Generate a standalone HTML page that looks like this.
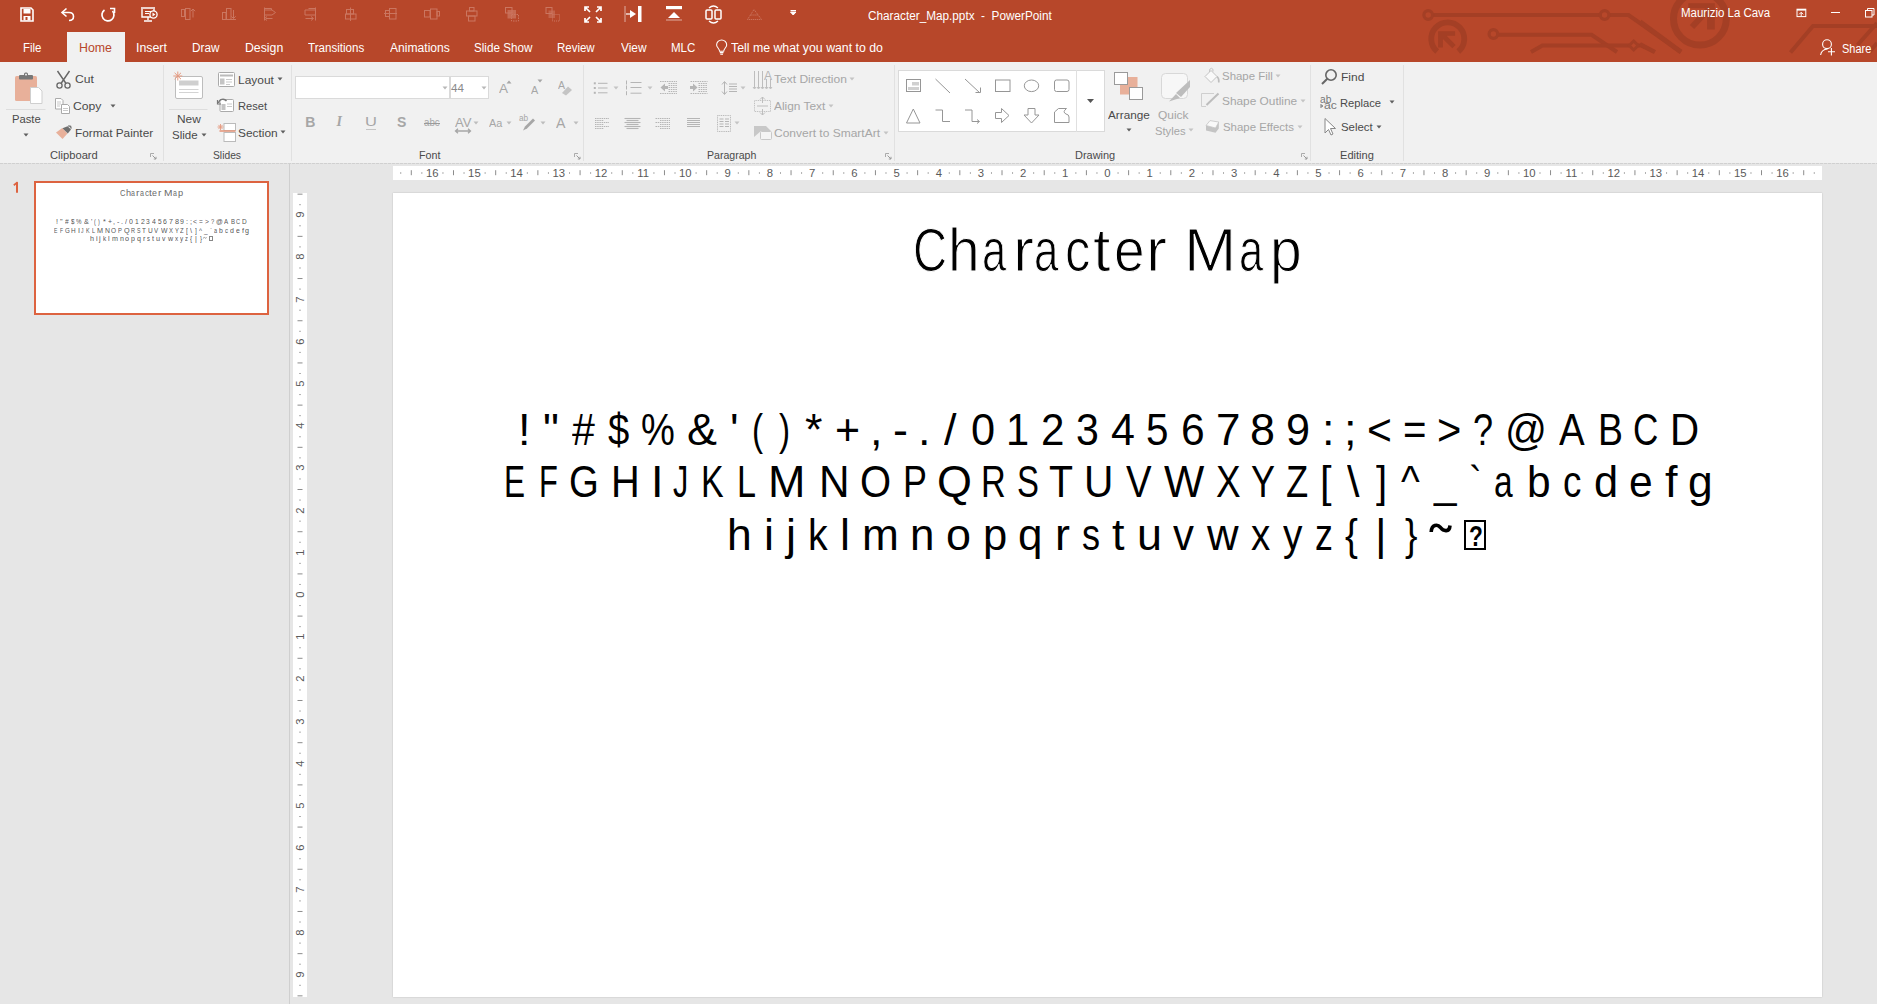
<!DOCTYPE html>
<html><head><meta charset="utf-8"><title>Character_Map.pptx - PowerPoint</title>
<style>
html,body{margin:0;padding:0;width:1877px;height:1004px;overflow:hidden;background:#E6E6E6;}
body{position:relative;font-family:"Liberation Sans",sans-serif;}
.t{position:absolute;white-space:pre;transform-origin:0 0;font-family:"Liberation Sans",sans-serif;}
svg{display:block;}
</style></head><body>
<div style="position:absolute;left:0px;top:0px;width:1877px;height:62px;background:#B7472A"></div>
<svg style="position:absolute;left:0px;top:0px;" width="1877" height="62" viewBox="0 0 1877 62"><g fill="none" stroke="#A43F25" stroke-width="4" stroke-linejoin="miter"><path d="M1432.5 15 H1600 M1609.5 15 H1628.5 L1681 52"/><circle cx="1428.2" cy="15" r="4.3" stroke-width="3.2"/><circle cx="1604.6" cy="15" r="4.3" stroke-width="3.2"/><path d="M1497.5 34.8 H1591.6 L1617 52"/><circle cx="1493.4" cy="34" r="4.3" stroke-width="3.2"/><path d="M1531 52 L1542.4 45.5 H1629.5 M1638 45.5 H1641 L1654.5 52"/><path d="M1633.7 41 L1638.2 45.5 L1633.7 50 L1629.2 45.5 Z" stroke-width="3"/><path d="M1790.5 52.5 L1813 25.9 H1877"/><path d="M1877 23 L1857.5 45"/><path d="M1877 43 L1869 52.5"/><path d="M1640 21.7 L1681 52" stroke-width="4.8"/><path d="M1640 44 L1655 52"/><path d="M1437.2 51.5 A16.5 16.5 0 1 1 1458.3 51.5" stroke-width="5.8"/><circle cx="1699.9" cy="18.7" r="26.4" stroke-width="7"/><path d="M1692 27 L1708 10" stroke-width="6"/></g><path d="M1438.1 31.3 H1455.1 V35.8 H1446.6 L1455.7 44.9 L1452.3 48.3 L1442.9 38.9 V47.6 H1438.1 Z" fill="#A43F25"/><path d="M1688.3 3.2 H1714.8 V29.4 H1707.1 V8.3 H1688.3 Z" fill="#A43F25"/></svg>
<svg style="position:absolute;left:0px;top:0px;" width="820" height="32" viewBox="0 0 820 32"><path d="M21 8 H31 L33 10 V21 H21 Z" fill="none" stroke="#FFFFFF" stroke-width="1.6"/><rect x="23.5" y="9" width="7" height="4.5" fill="#FFFFFF"/><rect x="23.5" y="16" width="7" height="4.5" fill="#FFFFFF"/><rect x="25.5" y="17" width="2" height="3" fill="#B7472A"/><path d="M62.5 12.5 H69 Q73.5 12.5 73.5 16.5 Q73.5 20.5 69 20.5" fill="none" stroke="#FFFFFF" stroke-width="1.6"/><path d="M66.5 8.5 L62 12.5 L66.5 16.5" fill="none" stroke="#FFFFFF" stroke-width="1.6"/><path d="M112.5 11 A6 6 0 1 1 104.5 10" fill="none" stroke="#FFFFFF" stroke-width="1.7"/><path d="M110 8.5 H114.5 V13" fill="none" stroke="#FFFFFF" stroke-width="1.6"/><path d="M141 8 H155 M142 9 V17 H154 V9" fill="none" stroke="#FFFFFF" stroke-width="1.4"/><path d="M145 11.5 H151 M145 13.5 H149" stroke="#FFFFFF" stroke-width="1"/><circle cx="153.5" cy="14.5" r="3.6" fill="#B7472A" stroke="#FFFFFF" stroke-width="1.3"/><path d="M152.5 12.6 V16.4 L155.3 14.5 Z" fill="#FFFFFF"/><path d="M148 17 V20 M144 21 H152" stroke="#FFFFFF" stroke-width="1.4"/><g fill="none" stroke="#CB7660" stroke-width="1"><rect x="181.5" y="9.5" width="3" height="7"/><rect x="185.5" y="8.5" width="4.5" height="11"/><path d="M193 17.5 V9 M190.8 11.2 L193 9 L195.2 11.2"/><rect x="222.5" y="12.5" width="3.5" height="7"/><rect x="226.5" y="8.5" width="4.5" height="11"/><path d="M233.5 10 V18.5 M231.3 16.3 L233.5 18.5 L235.7 16.3 M222 19.5 H236"/><path d="M264.5 7.5 V20.5 M264.5 8.5 H271.5 V10 M264.5 10 H272 L275.5 12.5 L272 15 H264.5 M266 18.5 H272.5 M264.5 18.5 L267 16.5 M264.5 18.5 L267 20.5"/><path d="M315.5 7.5 V20.5 M308.5 8.5 H315.5 M305 10 H315.5 M305 10 V15 H315.5 M305.5 18.5 H313 M311 16.5 L313.5 18.5 L311 20.5"/><rect x="346.5" y="9.5" width="7" height="4.5"/><rect x="345.5" y="14" width="10.5" height="5"/><path d="M350.5 7.5 V21"/><rect x="385.5" y="10.5" width="4" height="6"/><rect x="389.5" y="8.5" width="6.5" height="10.5"/><path d="M384 13.5 H397"/><rect x="424.5" y="10.5" width="5.5" height="6.5"/><rect x="430.5" y="9" width="6.5" height="10"/><rect x="437" y="11.5" width="2.5" height="4.5"/><rect x="469.5" y="7.5" width="4.5" height="3.5"/><rect x="466.5" y="11" width="10.5" height="5"/><rect x="468.5" y="16" width="6.5" height="5"/><rect x="505.5" y="7.5" width="6.5" height="5.5"/><rect x="511.5" y="14.5" width="7" height="6.5" stroke-dasharray="1.5 1"/><rect x="546" y="7.5" width="6" height="6"/><rect x="552.5" y="14.5" width="7" height="6.5" stroke-dasharray="1 1"/><path d="M747.5 19.5 L754 9.5 L761.5 19.5 Z M750.5 15 L758 15" stroke-dasharray="1.2 0.8"/></g><rect x="507.5" y="10" width="8.5" height="8.5" fill="#CB7660" opacity="0.75"/><rect x="548.5" y="10.5" width="6.5" height="7.5" fill="#CB7660" opacity="0.6"/><g fill="none" stroke="#FFFFFF" stroke-width="1.7"><path d="M585 11 V7 H589 M585 7 L590 12"/><path d="M601 11 V7 H597 M601 7 L596 12"/><path d="M585 18 V22 H589 M585 22 L590 17"/><path d="M601 18 V22 H597 M601 22 L596 17"/></g><path d="M625 6 V22" stroke="#FFFFFF" stroke-width="0.8" opacity="0.7"/><rect x="638" y="6" width="3.5" height="16" fill="#FFFFFF"/><path d="M630 10 L636 14 L630 18 Z" fill="#FFFFFF"/><path d="M626 14 H631" stroke="#FFFFFF" stroke-width="1.2"/><rect x="666" y="6" width="16" height="3.2" fill="#FFFFFF"/><path d="M668 18 L674 12 L680 18 Z" fill="#FFFFFF"/><path d="M666 20 H682" stroke="#FFFFFF" stroke-width="0.8" opacity="0.7"/><rect x="706" y="10" width="6" height="9" rx="1" fill="none" stroke="#FFFFFF" stroke-width="1.5"/><rect x="715" y="10" width="6" height="9" rx="1" fill="none" stroke="#FFFFFF" stroke-width="1.5"/><path d="M709 8 Q713.5 4 718 8 M709 21 Q713.5 25 718 21" fill="none" stroke="#FFFFFF" stroke-width="1.3"/><path d="M790.5 10.5 H796 M790.5 12 L793.2 15 L796 12 Z" fill="#FFFFFF" stroke="#FFFFFF" stroke-width="1"/></svg>
<div class="t" style="left:867.91px;top:10.24px;font-size:12.00px;line-height:12.00px;color:#FFFFFF;transform:scaleX(0.9801);">Character_Map.pptx  -  PowerPoint</div>
<div class="t" style="left:1680.58px;top:7.44px;font-size:12.00px;line-height:12.00px;color:#FFFFFF;transform:scaleX(0.9556);">Maurizio La Cava</div>
<svg style="position:absolute;left:0px;top:0px;" width="1877" height="32" viewBox="0 0 1877 32"><rect x="1797" y="9.2" width="8.8" height="7.4" fill="none" stroke="#fff" stroke-width="1"/><path d="M1797 9.8 H1805.8" stroke="#fff" stroke-width="1.6"/><path d="M1801.2 16 V12.5 M1799.2 14.3 L1801.2 12.3 L1803.2 14.3" fill="none" stroke="#fff" stroke-width="1"/><path d="M1831 12.5 H1840" stroke="#fff" stroke-width="1"/><rect x="1865.5" y="10.5" width="6.5" height="6.5" fill="none" stroke="#fff" stroke-width="1"/><path d="M1867.5 10.5 V8.5 H1874 V15 H1872" fill="none" stroke="#fff" stroke-width="1"/></svg>
<div style="position:absolute;left:67px;top:32px;width:58px;height:30px;background:#F1F1F1"></div>
<div class="t" style="left:23.08px;top:42.24px;font-size:12.00px;line-height:12.00px;color:#FFFFFF;transform:scaleX(0.9540);">File</div>
<div class="t" style="left:79.21px;top:42.24px;font-size:12.00px;line-height:12.00px;color:#B7472A;transform:scaleX(1.0302);">Home</div>
<div class="t" style="left:136.29px;top:42.24px;font-size:12.00px;line-height:12.00px;color:#FFFFFF;transform:scaleX(1.0291);">Insert</div>
<div class="t" style="left:192.46px;top:42.24px;font-size:12.00px;line-height:12.00px;color:#FFFFFF;transform:scaleX(0.9793);">Draw</div>
<div class="t" style="left:244.82px;top:42.24px;font-size:12.00px;line-height:12.00px;color:#FFFFFF;transform:scaleX(1.0230);">Design</div>
<div class="t" style="left:307.87px;top:42.24px;font-size:12.00px;line-height:12.00px;color:#FFFFFF;transform:scaleX(0.9653);">Transitions</div>
<div class="t" style="left:389.60px;top:42.24px;font-size:12.00px;line-height:12.00px;color:#FFFFFF;transform:scaleX(1.0081);">Animations</div>
<div class="t" style="left:474.28px;top:42.24px;font-size:12.00px;line-height:12.00px;color:#FFFFFF;transform:scaleX(0.9711);">Slide Show</div>
<div class="t" style="left:557.48px;top:42.24px;font-size:12.00px;line-height:12.00px;color:#FFFFFF;transform:scaleX(0.9557);">Review</div>
<div class="t" style="left:620.84px;top:42.24px;font-size:12.00px;line-height:12.00px;color:#FFFFFF;transform:scaleX(0.9907);">View</div>
<div class="t" style="left:671.48px;top:42.24px;font-size:12.00px;line-height:12.00px;color:#FFFFFF;transform:scaleX(0.9607);">MLC</div>
<div class="t" style="left:730.95px;top:42.44px;font-size:12.00px;line-height:12.00px;color:#FFFFFF;transform:scaleX(1.0261);">Tell me what you want to do</div>
<svg style="position:absolute;left:0px;top:0px;" width="900" height="62" viewBox="0 0 900 62"><path d="M719.6 51.3 C719.6 48.8 716.6 47.3 716.6 45 A5.05 5.05 0 0 1 726.7 45 C726.7 47.3 723.7 48.8 723.7 51.3 Z" fill="none" stroke="#fff" stroke-width="1.05"/><path d="M719.8 52.6 H723.5 M720.3 54.2 H723" stroke="#fff" stroke-width="1.1"/></svg>
<svg style="position:absolute;left:0px;top:0px;" width="1877" height="62" viewBox="0 0 1877 62"><circle cx="1827" cy="44.2" r="4.4" fill="none" stroke="#fff" stroke-width="1.1"/><path d="M1820.6 55 Q1821.5 49.5 1827.5 49" fill="none" stroke="#fff" stroke-width="1.1"/><path d="M1831.4 48 V55.5 M1828 51.7 H1835" stroke="#fff" stroke-width="1.1"/></svg>
<div class="t" style="left:1842.21px;top:42.84px;font-size:12.00px;line-height:12.00px;color:#FFFFFF;transform:scaleX(0.9159);">Share</div>
<div style="position:absolute;left:0px;top:62px;width:1877px;height:102px;background:#F1F1F1"></div>
<div style="position:absolute;left:0px;top:163px;width:1877px;height:1px;background:repeating-linear-gradient(90deg,#D0D0D0 0 3px,#E2E2E2 3px 4px)"></div>
<div style="position:absolute;left:163px;top:65px;width:1px;height:96px;background:#E1E1E1"></div>
<div style="position:absolute;left:291px;top:65px;width:1px;height:96px;background:#E1E1E1"></div>
<div style="position:absolute;left:583px;top:65px;width:1px;height:96px;background:#E1E1E1"></div>
<div style="position:absolute;left:894px;top:65px;width:1px;height:96px;background:#E1E1E1"></div>
<div style="position:absolute;left:1310px;top:65px;width:1px;height:96px;background:#E1E1E1"></div>
<div style="position:absolute;left:1403px;top:65px;width:1px;height:96px;background:#E1E1E1"></div>
<div class="t" style="left:50.24px;top:149.99px;font-size:11.00px;line-height:11.00px;color:#4A4A4A;transform:scaleX(1.0150);">Clipboard</div>
<div class="t" style="left:213.34px;top:149.89px;font-size:11.00px;line-height:11.00px;color:#4A4A4A;transform:scaleX(0.9349);">Slides</div>
<div class="t" style="left:418.94px;top:149.99px;font-size:11.00px;line-height:11.00px;color:#4A4A4A;transform:scaleX(0.9732);">Font</div>
<div class="t" style="left:706.55px;top:149.99px;font-size:11.00px;line-height:11.00px;color:#4A4A4A;transform:scaleX(0.9603);">Paragraph</div>
<div class="t" style="left:1074.72px;top:150.19px;font-size:11.00px;line-height:11.00px;color:#4A4A4A;transform:scaleX(0.9969);">Drawing</div>
<div class="t" style="left:1339.91px;top:149.89px;font-size:11.00px;line-height:11.00px;color:#4A4A4A;transform:scaleX(1.0059);">Editing</div>
<svg style="position:absolute;left:150.3px;top:152.5px;" width="7" height="7" viewBox="0 0 7 7"><path d="M0.5 4 V0.5 H4" fill="none" stroke="#ababab" stroke-width="1"/><path d="M2.5 2.5 L6 6 M6 3.8 V6 H3.8" fill="none" stroke="#9a9a9a" stroke-width="1"/></svg>
<svg style="position:absolute;left:573.6px;top:152.5px;" width="7" height="7" viewBox="0 0 7 7"><path d="M0.5 4 V0.5 H4" fill="none" stroke="#ababab" stroke-width="1"/><path d="M2.5 2.5 L6 6 M6 3.8 V6 H3.8" fill="none" stroke="#9a9a9a" stroke-width="1"/></svg>
<svg style="position:absolute;left:884.6px;top:152.5px;" width="7" height="7" viewBox="0 0 7 7"><path d="M0.5 4 V0.5 H4" fill="none" stroke="#ababab" stroke-width="1"/><path d="M2.5 2.5 L6 6 M6 3.8 V6 H3.8" fill="none" stroke="#9a9a9a" stroke-width="1"/></svg>
<svg style="position:absolute;left:1301px;top:152.5px;" width="7" height="7" viewBox="0 0 7 7"><path d="M0.5 4 V0.5 H4" fill="none" stroke="#ababab" stroke-width="1"/><path d="M2.5 2.5 L6 6 M6 3.8 V6 H3.8" fill="none" stroke="#9a9a9a" stroke-width="1"/></svg>
<svg style="position:absolute;left:0px;top:0px;" width="170" height="164" viewBox="0 0 170 164"><rect x="15" y="76" width="22" height="25" rx="1.5" fill="#E8B09A"/><rect x="19" y="75" width="14" height="4.5" rx="1" fill="#777"/><rect x="24" y="72.5" width="4" height="4" rx="1.5" fill="#777"/><rect x="25.2" y="73.8" width="1.6" height="1.6" fill="#fff"/><path d="M30.5 87.5 H38.5 L42 91 V103.5 H30.5 Z" fill="#fff" stroke="#cfcfcf" stroke-width="1"/><path d="M6 109.5 H45.5" stroke="#DDDDDD" stroke-width="1"/><path d="M57.5 71 L66 83.5 M69.5 71 L61 83.5" stroke="#666" stroke-width="1.4" fill="none"/><circle cx="59.5" cy="85.5" r="2.6" fill="none" stroke="#666" stroke-width="1.3"/><circle cx="67.5" cy="85.5" r="2.6" fill="none" stroke="#666" stroke-width="1.3"/><path d="M55.5 98.5 H61 L63 100.5 V109 H55.5 Z" fill="#fff" stroke="#aaa" stroke-width="1"/><path d="M61.5 104.5 H67.5 L69.5 106.5 V113.5 H61.5 Z" fill="#fff" stroke="#aaa" stroke-width="1"/><path d="M57 102 H61 M57 104 H61 M57 106 H60 M63 108.5 H68 M63 110.5 H68" stroke="#bbb" stroke-width="0.8"/><path d="M56 132.5 L62.3 128 L67.5 133.5 L62.5 139 Z" fill="#E8B09A"/><path d="M62.5 128.3 L67.6 126.2 L71 129.4 L67.8 133.6 Z" fill="#6f6f6f"/><path d="M68.2 125.8 L70.6 126.4 L71.2 128.6" fill="none" stroke="#6f6f6f" stroke-width="1.3"/></svg>
<div class="t" style="left:11.60px;top:114.49px;font-size:11.00px;line-height:11.00px;color:#4A4A4A;transform:scaleX(1.0213);">Paste</div>
<svg style="position:absolute;left:23.2px;top:132.5px;" width="6" height="4" viewBox="0 0 6 4"><path d="M0.5 0.5 H5.5 L3 3.5 Z" fill="#5F5F5F"/></svg>
<div class="t" style="left:74.79px;top:74.49px;font-size:11.00px;line-height:11.00px;color:#4A4A4A;transform:scaleX(1.1030);">Cut</div>
<div class="t" style="left:73.39px;top:100.89px;font-size:11.00px;line-height:11.00px;color:#4A4A4A;transform:scaleX(1.1060);">Copy</div>
<svg style="position:absolute;left:110px;top:104px;" width="6" height="4" viewBox="0 0 6 4"><path d="M0.5 0.5 H5.5 L3 3.5 Z" fill="#5F5F5F"/></svg>
<div class="t" style="left:74.75px;top:127.79px;font-size:11.00px;line-height:11.00px;color:#4A4A4A;transform:scaleX(1.0744);">Format Painter</div>
<svg style="position:absolute;left:0px;top:0px;" width="300" height="164" viewBox="0 0 300 164"><rect x="175.5" y="76.5" width="27" height="22" rx="1.5" fill="#fff" stroke="#bdbdbd" stroke-width="1"/><rect x="179" y="80.5" width="19.5" height="5" fill="#cfcfcf"/><path d="M179 89.5 H198.5 M179 92.5 H198.5" stroke="#c8c8c8" stroke-width="0.8"/><g stroke="#E59A80" stroke-width="1"><path d="M177.8 71.5 V80.5 M173.3 76 H182.3 M174.6 72.8 L181 79.2 M181 72.8 L174.6 79.2"/></g><path d="M169 109.5 H207.5" stroke="#DDDDDD" stroke-width="1"/><rect x="218.5" y="72.5" width="16" height="14" rx="1" fill="#fff" stroke="#aaa" stroke-width="1"/><rect x="220" y="74.5" width="13" height="2" fill="#bbb"/><rect x="220" y="78.5" width="4.5" height="6" fill="#c4c4c4"/><path d="M226 79.5 H232 M226 82 H232 M226 84.5 H230" stroke="#bbb" stroke-width="0.8"/><rect x="220" y="99.5" width="13.5" height="12" rx="1" fill="#fff" stroke="#aaa" stroke-width="1"/><rect x="221.5" y="104" width="4" height="6" fill="#c4c4c4"/><path d="M227 104 H232 M227 106.5 H232" stroke="#bbb" stroke-width="0.8"/><path d="M218.5 103 A4.5 4.5 0 0 1 226.5 101" fill="none" stroke="#777" stroke-width="1.4"/><path d="M217.5 100 V104 H221" fill="none" stroke="#777" stroke-width="1.2"/><rect x="224" y="123.5" width="11.5" height="7" fill="#fff" stroke="#bbb" stroke-width="1"/><rect x="224" y="132.5" width="11.5" height="9" fill="#fff" stroke="#bbb" stroke-width="1"/><path d="M219.5 131 H235.5" stroke="#E59A80" stroke-width="1.6"/><g stroke="#E59A80" stroke-width="0.9"><path d="M220.5 124 V130 M217.5 127 H223.5 M218.4 124.9 L222.6 129.1 M222.6 124.9 L218.4 129.1"/></g></svg>
<div class="t" style="left:176.65px;top:114.19px;font-size:11.00px;line-height:11.00px;color:#4A4A4A;transform:scaleX(1.0815);">New</div>
<div class="t" style="left:171.98px;top:130.09px;font-size:11.00px;line-height:11.00px;color:#4A4A4A;transform:scaleX(1.0475);">Slide</div>
<svg style="position:absolute;left:200.6px;top:132.6px;" width="6" height="4" viewBox="0 0 6 4"><path d="M0.5 0.5 H5.5 L3 3.5 Z" fill="#5F5F5F"/></svg>
<div class="t" style="left:237.54px;top:74.69px;font-size:11.00px;line-height:11.00px;color:#4A4A4A;transform:scaleX(1.0853);">Layout</div>
<svg style="position:absolute;left:276.5px;top:77px;" width="6" height="4" viewBox="0 0 6 4"><path d="M0.5 0.5 H5.5 L3 3.5 Z" fill="#5F5F5F"/></svg>
<div class="t" style="left:237.91px;top:101.39px;font-size:11.00px;line-height:11.00px;color:#4A4A4A;transform:scaleX(1.0117);">Reset</div>
<div class="t" style="left:237.96px;top:127.59px;font-size:11.00px;line-height:11.00px;color:#4A4A4A;transform:scaleX(1.0825);">Section</div>
<svg style="position:absolute;left:280px;top:130.4px;" width="6" height="4" viewBox="0 0 6 4"><path d="M0.5 0.5 H5.5 L3 3.5 Z" fill="#5F5F5F"/></svg>
<div style="position:absolute;left:295px;top:76px;width:155px;height:23px;background:#fff;border:1px solid #DADADA;box-sizing:border-box"></div>
<div style="position:absolute;left:450px;top:76px;width:39px;height:23px;background:#fff;border:1px solid #DADADA;box-sizing:border-box"></div>
<svg style="position:absolute;left:442.4px;top:85.8px;" width="6" height="4" viewBox="0 0 6 4"><path d="M0.5 0.5 H5.5 L3 3.5 Z" fill="#B8B8B8"/></svg>
<svg style="position:absolute;left:481.2px;top:85.8px;" width="6" height="4" viewBox="0 0 6 4"><path d="M0.5 0.5 H5.5 L3 3.5 Z" fill="#B8B8B8"/></svg>
<div class="t" style="left:451.27px;top:83.29px;font-size:11.00px;line-height:11.00px;color:#8A8A8A;transform:scaleX(1.0549);">44</div>
<svg style="position:absolute;left:0px;top:0px;" width="600" height="164" viewBox="0 0 600 164"></svg>
<div class="t" style="left:499.00px;top:82.37px;font-size:13.50px;line-height:13.50px;color:#A6A6A6;transform:scaleX(1.0025);">A</div>
<svg style="position:absolute;left:505.5px;top:79.5px;" width="6" height="4" viewBox="0 0 6 4"><path d="M0.5 3.5 L3 0.5 L5.5 3.5 Z" fill="#A6A6A6"/></svg>
<div class="t" style="left:531.00px;top:84.91px;font-size:10.50px;line-height:10.50px;color:#A6A6A6;transform:scaleX(1.0311);">A</div>
<svg style="position:absolute;left:536.5px;top:79px;" width="6" height="4" viewBox="0 0 6 4"><path d="M0.5 0.5 H5.5 L3 3.5 Z" fill="#A6A6A6"/></svg>
<div class="t" style="left:558.20px;top:80.53px;font-size:10.00px;line-height:10.00px;color:#A6A6A6;transform:scaleX(1.0526);">A</div>
<svg style="position:absolute;left:560px;top:84px;" width="13" height="12" viewBox="0 0 13 12"><path d="M2 9 L8 2.5 L12 6 L6 11.5 Z" fill="#c4c4c4"/></svg>
<div class="t" style="left:305.2px;top:115.3px;font-size:14px;line-height:14px;font-weight:bold;color:#A6A6A6">B</div>
<div class="t" style="left:336.5px;top:115.3px;font-size:14px;line-height:14px;font-style:italic;font-family:'Liberation Serif',serif;font-weight:bold;color:#A6A6A6">I</div>
<div class="t" style="left:364.56px;top:115.37px;font-size:13.50px;line-height:13.50px;color:#A6A6A6;transform:scaleX(1.2216);">U</div>
<div style="position:absolute;left:366px;top:128.5px;width:9.5px;height:1.3px;background:#c4c4c4"></div>
<div class="t" style="left:397px;top:115.3px;font-size:14px;line-height:14px;font-weight:bold;color:#A6A6A6">S</div>
<div class="t" style="left:424.11px;top:118.03px;font-size:10.00px;line-height:10.00px;color:#A6A6A6;transform:scaleX(0.9709);">abc</div>
<div style="position:absolute;left:424px;top:123.3px;width:16px;height:1px;background:#9a9a9a"></div>
<div class="t" style="left:454.60px;top:115.57px;font-size:13.50px;line-height:13.50px;color:#A6A6A6;transform:scaleX(0.9680);">AV</div>
<svg style="position:absolute;left:454px;top:127.5px;" width="18" height="6" viewBox="0 0 18 6"><path d="M1.5 3 H16.5 M4 0.8 L1.5 3 L4 5.2 M14 0.8 L16.5 3 L14 5.2" fill="none" stroke="#A6A6A6" stroke-width="1.3"/></svg>
<svg style="position:absolute;left:472.6px;top:121.2px;" width="6" height="4" viewBox="0 0 6 4"><path d="M0.5 0.5 H5.5 L3 3.5 Z" fill="#BDBDBD"/></svg>
<div class="t" style="left:489.00px;top:117.66px;font-size:11.50px;line-height:11.50px;color:#A6A6A6;transform:scaleX(0.9480);">Aa</div>
<svg style="position:absolute;left:506px;top:121.2px;" width="6" height="4" viewBox="0 0 6 4"><path d="M0.5 0.5 H5.5 L3 3.5 Z" fill="#BDBDBD"/></svg>
<div class="t" style="left:519.37px;top:114.38px;font-size:9.00px;line-height:9.00px;color:#A6A6A6;transform:scaleX(0.9169);">ab</div>
<svg style="position:absolute;left:521px;top:117px;" width="15" height="15" viewBox="0 0 15 15"><path d="M2 13.5 L4 9.5 L12 1.5 L14 3.5 L6 11.5 Z" fill="#A6A6A6"/></svg>
<svg style="position:absolute;left:539.8px;top:121.2px;" width="6" height="4" viewBox="0 0 6 4"><path d="M0.5 0.5 H5.5 L3 3.5 Z" fill="#BDBDBD"/></svg>
<div class="t" style="left:556.20px;top:115.75px;font-size:14.00px;line-height:14.00px;color:#A6A6A6;transform:scaleX(1.0097);">A</div>
<svg style="position:absolute;left:573.2px;top:121.2px;" width="6" height="4" viewBox="0 0 6 4"><path d="M0.5 0.5 H5.5 L3 3.5 Z" fill="#BDBDBD"/></svg>
<svg style="position:absolute;left:0px;top:0px;" width="900" height="164" viewBox="0 0 900 164"><g fill="none" stroke="#B5B5B5" stroke-width="1"><rect x="593.8" y="82.3" width="2" height="2" fill="#B5B5B5" stroke="none"/><path d="M598 83.3 H607.5"/><rect x="593.8" y="87" width="2" height="2" fill="#B5B5B5" stroke="none"/><path d="M598 88 H607.5"/><rect x="593.8" y="91.8" width="2" height="2" fill="#B5B5B5" stroke="none"/><path d="M598 92.8 H607.5"/><path d="M626.5 80.5 V84.5"/><path d="M630.5 82.5 H641.5"/><path d="M626.5 85.5 V89.5"/><path d="M630.5 87.5 H641.5"/><path d="M626.5 91.2 V95.2"/><path d="M630.5 93.2 H641.5"/><path d="M660 81.5 H677" stroke-dasharray="1.5 0.8"/><path d="M668.5 83.5 H677" stroke-dasharray="1.5 0.8"/><path d="M668.5 85.5 H677" stroke-dasharray="1.5 0.8"/><path d="M668.5 87.5 H677" stroke-dasharray="1.5 0.8"/><path d="M668.5 89.5 H677" stroke-dasharray="1.5 0.8"/><path d="M668.5 91.5 H677" stroke-dasharray="1.5 0.8"/><path d="M660 93.5 H677" stroke-dasharray="1.5 0.8"/><path d="M660.5 87.5 L665 83.5 V86 H668 V89 H665 V91.5 Z" fill="#B5B5B5" stroke="none"/><path d="M690.5 81.5 H707.5" stroke-dasharray="1.5 0.8"/><path d="M698.5 83.5 H707.5" stroke-dasharray="1.5 0.8"/><path d="M698.5 85.5 H707.5" stroke-dasharray="1.5 0.8"/><path d="M698.5 87.5 H707.5" stroke-dasharray="1.5 0.8"/><path d="M698.5 89.5 H707.5" stroke-dasharray="1.5 0.8"/><path d="M698.5 91.5 H707.5" stroke-dasharray="1.5 0.8"/><path d="M690.5 93.5 H707.5" stroke-dasharray="1.5 0.8"/><path d="M697.5 87.5 L693 83.5 V86 H690 V89 H693 V91.5 Z" fill="#B5B5B5" stroke="none"/><path d="M724.5 82 V94 M722 84.5 L724.5 81.5 L727 84.5 M722 91.5 L724.5 94.5 L727 91.5"/><path d="M729 84 H737"/><path d="M729 86.5 H737"/><path d="M729 89 H737"/><path d="M729 91.5 H737"/><path d="M595 118.5 H609" stroke-dasharray="1.5 0.7"/><path d="M595 120.5 H604" stroke-dasharray="1.5 0.7"/><path d="M595 122.5 H609" stroke-dasharray="1.5 0.7"/><path d="M595 124.5 H604" stroke-dasharray="1.5 0.7"/><path d="M595 126.5 H609" stroke-dasharray="1.5 0.7"/><path d="M595 128.5 H604" stroke-dasharray="1.5 0.7"/><path d="M624.5 118.5 H640.5" stroke-width="1.1"/><path d="M626.5 120.5 H638.5" stroke-width="1.1"/><path d="M624.5 122.5 H640.5" stroke-width="1.1"/><path d="M626.5 124.5 H638.5" stroke-width="1.1"/><path d="M624.5 126.5 H640.5" stroke-width="1.1"/><path d="M626.5 128.5 H638.5" stroke-width="1.1"/><path d="M655.5 118.5 H670" stroke-dasharray="1.5 0.7"/><path d="M660 120.5 H670" stroke-dasharray="1.5 0.7"/><path d="M655.5 122.5 H670" stroke-dasharray="1.5 0.7"/><path d="M660 124.5 H670" stroke-dasharray="1.5 0.7"/><path d="M655.5 126.5 H670" stroke-dasharray="1.5 0.7"/><path d="M660 128.5 H670" stroke-dasharray="1.5 0.7"/><path d="M687 118.5 H700"/><path d="M687 120.5 H700"/><path d="M687 122.5 H700"/><path d="M687 124.5 H700"/><path d="M687 126.5 H700"/><rect x="717.5" y="115.5" width="13" height="16" stroke-dasharray="1 0.8"/><path d="M719.5 119 H723.5 M725 119 H729"/><path d="M719.5 121.5 H723.5 M725 121.5 H729"/><path d="M719.5 124 H723.5 M725 124 H729"/><path d="M719.5 126.5 H723.5 M725 126.5 H729"/></g></svg>
<svg style="position:absolute;left:613.4px;top:85.6px;" width="6" height="4" viewBox="0 0 6 4"><path d="M0.5 0.5 H5.5 L3 3.5 Z" fill="#C4C4C4"/></svg>
<svg style="position:absolute;left:646.6px;top:85.6px;" width="6" height="4" viewBox="0 0 6 4"><path d="M0.5 0.5 H5.5 L3 3.5 Z" fill="#C4C4C4"/></svg>
<svg style="position:absolute;left:739.6px;top:85.6px;" width="6" height="4" viewBox="0 0 6 4"><path d="M0.5 0.5 H5.5 L3 3.5 Z" fill="#C4C4C4"/></svg>
<svg style="position:absolute;left:734px;top:121.4px;" width="6" height="4" viewBox="0 0 6 4"><path d="M0.5 0.5 H5.5 L3 3.5 Z" fill="#C4C4C4"/></svg>
<svg style="position:absolute;left:0px;top:0px;" width="900" height="164" viewBox="0 0 900 164"><g fill="none" stroke="#BDBDBD" stroke-width="1"><path d="M754.5 71 V88 M758.5 71 V88 M762.5 71 V88 M766.5 79 V88 M770.5 79 V88"/><path d="M753 87 L754.5 89 L756 87 M757 87 L758.5 89 L760 87 M761 87 L762.5 89 L764 87 M765 87 L766.5 89 L768 87 M769 87 L770.5 89 L772 87"/><rect x="754.5" y="100.5" width="16" height="11" stroke-dasharray="1 0.8"/><path d="M762.5 97 V103 M760 99.5 L762.5 97 L765 99.5 M762.5 109 V115 M760 112.5 L762.5 115 L765 112.5"/><path d="M757 106 H768"/></g><path d="M754 126 H766 L771 131 H761 L754 137 Z" fill="#C8C8C8"/><rect x="760.5" y="131.5" width="11" height="8" rx="1" fill="#F4F4F4" stroke="#C8C8C8" stroke-width="1"/></svg>
<div class="t" style="left:763.50px;top:70.34px;font-size:12.00px;line-height:12.00px;color:#B5B5B5;transform:scaleX(1.0025);">A</div>
<div class="t" style="left:774.16px;top:74.39px;font-size:11.00px;line-height:11.00px;color:#A6A6A6;transform:scaleX(1.0933);">Text Direction</div>
<svg style="position:absolute;left:849.3px;top:77px;" width="6" height="4" viewBox="0 0 6 4"><path d="M0.5 0.5 H5.5 L3 3.5 Z" fill="#C4C4C4"/></svg>
<div class="t" style="left:774.40px;top:101.39px;font-size:11.00px;line-height:11.00px;color:#A6A6A6;transform:scaleX(1.0799);">Align Text</div>
<svg style="position:absolute;left:828.3px;top:103.8px;" width="6" height="4" viewBox="0 0 6 4"><path d="M0.5 0.5 H5.5 L3 3.5 Z" fill="#C4C4C4"/></svg>
<div class="t" style="left:773.80px;top:127.79px;font-size:11.00px;line-height:11.00px;color:#A6A6A6;transform:scaleX(1.0903);">Convert to SmartArt</div>
<svg style="position:absolute;left:882.6px;top:130.5px;" width="6" height="4" viewBox="0 0 6 4"><path d="M0.5 0.5 H5.5 L3 3.5 Z" fill="#C4C4C4"/></svg>
<div style="position:absolute;left:898px;top:70px;width:207px;height:62px;background:#fff;border:1px solid #DADADA;box-sizing:border-box"></div>
<div style="position:absolute;left:1076px;top:70px;width:1px;height:62px;background:#E0E0E0"></div>
<svg style="position:absolute;left:0px;top:0px;" width="1320" height="164" viewBox="0 0 1320 164"><g fill="none" stroke="#969696" stroke-width="1"><rect x="906.5" y="79.5" width="14" height="12"/><rect x="912" y="82" width="7" height="3.5" fill="#D0D0D0" stroke="none"/><rect x="908" y="87" width="11" height="3" fill="#D0D0D0" stroke="none"/><path d="M935.5 79 L950 93"/><path d="M965 79 L980 93 M975.5 92.5 H980.5 V87.5"/><rect x="995.5" y="80" width="14.5" height="11.5"/><ellipse cx="1031.5" cy="85.8" rx="7.2" ry="5.8"/><rect x="1054.5" y="80" width="14.5" height="11.5" rx="2"/><path d="M906.5 123 L913.3 109 L920 123 Z"/><path d="M935.5 110 H942.5 V121.5 H950"/><path d="M965 110 H972 V121.5 H979 M977 119.5 L979.5 121.5 L977 123.5"/><path d="M995.5 112.5 H1001.5 V108.5 L1009 115.5 L1001.5 122.5 V118.5 H995.5 Z"/><path d="M1028 108.5 H1035 V115 H1039 L1031.5 123 L1024 115 H1028 Z"/><path d="M1054.5 122.5 V112 L1058.5 108.5 H1066.5 Q1062 112 1066 114 Q1069 114.5 1069 117 V122.5 Z"/></g><path d="M1087 99 H1094 L1090.5 103 Z" fill="#555"/><rect x="1120" y="77" width="17.5" height="17.5" fill="#E8B09A"/><rect x="1114.5" y="72.5" width="13" height="12" fill="#fff" stroke="#9a9a9a" stroke-width="1"/><rect x="1129.5" y="87.5" width="13" height="12" fill="#fff" stroke="#9a9a9a" stroke-width="1"/><rect x="1161.5" y="73.5" width="26" height="25" rx="4" fill="#F7F7F7" stroke="#D8D8D8" stroke-width="1"/><path d="M1169 101.5 L1176 94 L1180 98 Z" fill="#BDBDBD"/><path d="M1176 93 L1190 80 V87 L1181 97 Z" fill="#BDBDBD"/><path d="M1205 76.5 L1211 70.5 L1217 76.5 L1211 82.5 Z" fill="#F9F9F9" stroke="#C4C4C4" stroke-width="1"/><path d="M1209.5 72 Q1209 68.3 1211.5 68.3 Q1213.5 68.5 1213 71.5" fill="none" stroke="#C4C4C4" stroke-width="1"/><path d="M1217 76.5 Q1219.3 78.5 1218.8 82.5" fill="none" stroke="#BDBDBD" stroke-width="1.6"/><path d="M1201.5 106.5 V93.5 H1214" fill="none" stroke="#CFCFCF" stroke-width="1"/><path d="M1201.5 106.5 H1206" fill="none" stroke="#CFCFCF" stroke-width="1"/><path d="M1206.5 105 L1218.5 93.5" stroke="#BDBDBD" stroke-width="2"/><path d="M1206 125.5 L1215.5 128 L1218.8 122 L1218.8 128.5 L1215.5 132.8 L1206 130.5 Z" fill="#C4C4C4"/><path d="M1206 125.5 L1210 120.6 L1218.8 122 L1215.5 128 Z" fill="#F9F9F9" stroke="#C4C4C4" stroke-width="0.8"/></svg>
<div class="t" style="left:1108.00px;top:109.69px;font-size:11.00px;line-height:11.00px;color:#4A4A4A;transform:scaleX(1.0671);">Arrange</div>
<svg style="position:absolute;left:1125.6px;top:128.4px;" width="6" height="4" viewBox="0 0 6 4"><path d="M0.5 0.5 H5.5 L3 3.5 Z" fill="#5F5F5F"/></svg>
<div class="t" style="left:1158.46px;top:109.69px;font-size:11.00px;line-height:11.00px;color:#A6A6A6;transform:scaleX(1.0866);">Quick</div>
<div class="t" style="left:1154.70px;top:125.69px;font-size:11.00px;line-height:11.00px;color:#A6A6A6;transform:scaleX(1.0174);">Styles</div>
<svg style="position:absolute;left:1188.2px;top:128.4px;" width="6" height="4" viewBox="0 0 6 4"><path d="M0.5 0.5 H5.5 L3 3.5 Z" fill="#C4C4C4"/></svg>
<div class="t" style="left:1222.39px;top:71.29px;font-size:11.00px;line-height:11.00px;color:#A6A6A6;transform:scaleX(1.0402);">Shape Fill</div>
<svg style="position:absolute;left:1275.4px;top:73.5px;" width="6" height="4" viewBox="0 0 6 4"><path d="M0.5 0.5 H5.5 L3 3.5 Z" fill="#C4C4C4"/></svg>
<div class="t" style="left:1222.37px;top:95.99px;font-size:11.00px;line-height:11.00px;color:#A6A6A6;transform:scaleX(1.0787);">Shape Outline</div>
<svg style="position:absolute;left:1300.1px;top:98.5px;" width="6" height="4" viewBox="0 0 6 4"><path d="M0.5 0.5 H5.5 L3 3.5 Z" fill="#C4C4C4"/></svg>
<div class="t" style="left:1223.29px;top:122.19px;font-size:11.00px;line-height:11.00px;color:#A6A6A6;transform:scaleX(1.0381);">Shape Effects</div>
<svg style="position:absolute;left:1296.8px;top:124.5px;" width="6" height="4" viewBox="0 0 6 4"><path d="M0.5 0.5 H5.5 L3 3.5 Z" fill="#C4C4C4"/></svg>
<svg style="position:absolute;left:0px;top:0px;" width="1420" height="164" viewBox="0 0 1420 164"><circle cx="1331" cy="75" r="5.2" fill="none" stroke="#666" stroke-width="1.6"/><path d="M1327.3 78.7 L1322 84" stroke="#666" stroke-width="2"/><path d="M1320.5 104 L1322.5 106 L1320.5 108 M1320 106 H1323" fill="none" stroke="#777" stroke-width="1"/><path d="M1325 118.5 V133 L1328.5 129.5 L1331 135 L1333 134 L1330.5 128.5 H1335.5 Z" fill="#fff" stroke="#888" stroke-width="1"/></svg>
<div class="t" style="left:1319.59px;top:95.33px;font-size:10.00px;line-height:10.00px;color:#777777;transform:scaleX(1.0194);">ab</div>
<div class="t" style="left:1324.02px;top:101.13px;font-size:10.00px;line-height:10.00px;color:#777777;transform:scaleX(1.2121);">ac</div>
<div class="t" style="left:1340.54px;top:72.39px;font-size:11.00px;line-height:11.00px;color:#4A4A4A;transform:scaleX(1.0909);">Find</div>
<div class="t" style="left:1339.90px;top:97.59px;font-size:11.00px;line-height:11.00px;color:#4A4A4A;transform:scaleX(1.0181);">Replace</div>
<svg style="position:absolute;left:1389.1px;top:99.7px;" width="6" height="4" viewBox="0 0 6 4"><path d="M0.5 0.5 H5.5 L3 3.5 Z" fill="#5F5F5F"/></svg>
<div class="t" style="left:1340.69px;top:122.19px;font-size:11.00px;line-height:11.00px;color:#4A4A4A;transform:scaleX(1.0375);">Select</div>
<svg style="position:absolute;left:1375.5px;top:124.6px;" width="6" height="4" viewBox="0 0 6 4"><path d="M0.5 0.5 H5.5 L3 3.5 Z" fill="#5F5F5F"/></svg>
<div style="position:absolute;left:289px;top:164px;width:1px;height:840px;background:#CFCFCF"></div>
<svg style="position:absolute;left:10px;top:178px;" width="12" height="18" viewBox="0 0 12 18"><path d="M7 4.2 V14.8" stroke="#DD6340" stroke-width="2"/><path d="M3.8 7.2 L7.6 4.3" stroke="#DD6340" stroke-width="1.7"/></svg>
<div style="position:absolute;left:393px;top:193px;width:1429px;height:804px;background:#fff;box-shadow:0 0 1.5px rgba(0,0,0,0.22);color:#000;overflow:hidden"><div class="t" style="left:519.55px;top:27.05px;font-size:61.00px;line-height:61.00px;transform:scaleX(0.772);-webkit-text-stroke:1.1px #fff;">C</div>
<div class="t" style="left:555.02px;top:27.05px;font-size:61.00px;line-height:61.00px;transform:scaleX(0.933);-webkit-text-stroke:1.1px #fff;">h</div>
<div class="t" style="left:589.46px;top:27.05px;font-size:61.00px;line-height:61.00px;transform:scaleX(0.713);-webkit-text-stroke:1.1px #fff;">a</div>
<div class="t" style="left:620.06px;top:27.05px;font-size:61.00px;line-height:61.00px;transform:scaleX(1.030);-webkit-text-stroke:1.1px #fff;">r</div>
<div class="t" style="left:641.44px;top:27.05px;font-size:61.00px;line-height:61.00px;transform:scaleX(0.719);-webkit-text-stroke:1.1px #fff;">a</div>
<div class="t" style="left:671.97px;top:27.05px;font-size:61.00px;line-height:61.00px;transform:scaleX(0.833);-webkit-text-stroke:1.1px #fff;">c</div>
<div class="t" style="left:700.25px;top:27.05px;font-size:61.00px;line-height:61.00px;transform:scaleX(1.030);-webkit-text-stroke:1.1px #fff;">t</div>
<div class="t" style="left:720.50px;top:27.05px;font-size:61.00px;line-height:61.00px;transform:scaleX(0.903);-webkit-text-stroke:1.1px #fff;">e</div>
<div class="t" style="left:753.41px;top:27.05px;font-size:61.00px;line-height:61.00px;transform:scaleX(1.030);-webkit-text-stroke:1.1px #fff;">r</div>
<div class="t" style="left:791.13px;top:27.05px;font-size:61.00px;line-height:61.00px;transform:scaleX(1.030);-webkit-text-stroke:1.1px #fff;">M</div>
<div class="t" style="left:846.46px;top:27.05px;font-size:61.00px;line-height:61.00px;transform:scaleX(0.713);-webkit-text-stroke:1.1px #fff;">a</div>
<div class="t" style="left:877.29px;top:27.05px;font-size:61.00px;line-height:61.00px;transform:scaleX(0.936);-webkit-text-stroke:1.1px #fff;">p</div>
<div class="t" style="left:124.88px;top:215.68px;font-size:43.60px;line-height:43.60px;transform:scaleX(1.030);">!</div>
<div class="t" style="left:149.83px;top:215.68px;font-size:43.60px;line-height:43.60px;transform:scaleX(1.030);">"</div>
<div class="t" style="left:178.89px;top:215.68px;font-size:43.60px;line-height:43.60px;transform:scaleX(0.943);">#</div>
<div class="t" style="left:214.72px;top:215.68px;font-size:43.60px;line-height:43.60px;transform:scaleX(0.878);">$</div>
<div class="t" style="left:248.07px;top:215.68px;font-size:43.60px;line-height:43.60px;transform:scaleX(0.873);">%</div>
<div class="t" style="left:294.02px;top:215.68px;font-size:43.60px;line-height:43.60px;transform:scaleX(1.030);">&amp;</div>
<div class="t" style="left:337.48px;top:215.68px;font-size:43.60px;line-height:43.60px;transform:scaleX(1.030);">'</div>
<div class="t" style="left:358.51px;top:215.68px;font-size:43.60px;line-height:43.60px;transform:scaleX(0.762);">(</div>
<div class="t" style="left:385.93px;top:215.68px;font-size:43.60px;line-height:43.60px;transform:scaleX(0.762);">)</div>
<div class="t" style="left:411.59px;top:215.68px;font-size:43.60px;line-height:43.60px;transform:scaleX(1.030);">*</div>
<div class="t" style="left:442.36px;top:215.68px;font-size:43.60px;line-height:43.60px;transform:scaleX(0.984);">+</div>
<div class="t" style="left:476.61px;top:215.68px;font-size:43.60px;line-height:43.60px;transform:scaleX(1.030);">,</div>
<div class="t" style="left:500.18px;top:215.68px;font-size:43.60px;line-height:43.60px;transform:scaleX(1.030);">-</div>
<div class="t" style="left:525.43px;top:215.68px;font-size:43.60px;line-height:43.60px;transform:scaleX(1.030);">.</div>
<div class="t" style="left:551.21px;top:215.68px;font-size:43.60px;line-height:43.60px;transform:scaleX(1.030);">/</div>
<div class="t" style="left:577.87px;top:215.68px;font-size:43.60px;line-height:43.60px;transform:scaleX(0.994);">0</div>
<div class="t" style="left:613.18px;top:215.68px;font-size:43.60px;line-height:43.60px;transform:scaleX(0.954);">1</div>
<div class="t" style="left:647.79px;top:215.68px;font-size:43.60px;line-height:43.60px;transform:scaleX(0.968);">2</div>
<div class="t" style="left:683.06px;top:215.68px;font-size:43.60px;line-height:43.60px;transform:scaleX(0.942);">3</div>
<div class="t" style="left:718.04px;top:215.68px;font-size:43.60px;line-height:43.60px;transform:scaleX(0.986);">4</div>
<div class="t" style="left:753.38px;top:215.68px;font-size:43.60px;line-height:43.60px;transform:scaleX(0.927);">5</div>
<div class="t" style="left:788.07px;top:215.68px;font-size:43.60px;line-height:43.60px;transform:scaleX(0.977);">6</div>
<div class="t" style="left:822.60px;top:215.68px;font-size:43.60px;line-height:43.60px;transform:scaleX(1.008);">7</div>
<div class="t" style="left:857.18px;top:215.68px;font-size:43.60px;line-height:43.60px;transform:scaleX(1.030);">8</div>
<div class="t" style="left:892.75px;top:215.68px;font-size:43.60px;line-height:43.60px;transform:scaleX(0.991);">9</div>
<div class="t" style="left:928.93px;top:215.68px;font-size:43.60px;line-height:43.60px;transform:scaleX(1.030);">:</div>
<div class="t" style="left:951.06px;top:215.68px;font-size:43.60px;line-height:43.60px;transform:scaleX(1.030);">;</div>
<div class="t" style="left:973.97px;top:215.68px;font-size:43.60px;line-height:43.60px;transform:scaleX(0.979);">&lt;</div>
<div class="t" style="left:1009.69px;top:215.68px;font-size:43.60px;line-height:43.60px;transform:scaleX(0.922);">=</div>
<div class="t" style="left:1044.22px;top:215.68px;font-size:43.60px;line-height:43.60px;transform:scaleX(0.955);">&gt;</div>
<div class="t" style="left:1080.36px;top:215.68px;font-size:43.60px;line-height:43.60px;transform:scaleX(0.827);">?</div>
<div class="t" style="left:1112.29px;top:215.68px;font-size:43.60px;line-height:43.60px;transform:scaleX(0.950);">@</div>
<div class="t" style="left:1166.00px;top:215.68px;font-size:43.60px;line-height:43.60px;transform:scaleX(0.883);">A</div>
<div class="t" style="left:1204.61px;top:215.68px;font-size:43.60px;line-height:43.60px;transform:scaleX(0.857);">B</div>
<div class="t" style="left:1240.24px;top:215.68px;font-size:43.60px;line-height:43.60px;transform:scaleX(0.805);">C</div>
<div class="t" style="left:1277.07px;top:215.68px;font-size:43.60px;line-height:43.60px;transform:scaleX(0.925);">D</div>
<div class="t" style="left:110.68px;top:267.58px;font-size:43.60px;line-height:43.60px;transform:scaleX(0.724);">E</div>
<div class="t" style="left:145.53px;top:267.58px;font-size:43.60px;line-height:43.60px;transform:scaleX(0.707);">F</div>
<div class="t" style="left:176.48px;top:267.58px;font-size:43.60px;line-height:43.60px;transform:scaleX(0.879);">G</div>
<div class="t" style="left:217.91px;top:267.58px;font-size:43.60px;line-height:43.60px;transform:scaleX(0.913);">H</div>
<div class="t" style="left:257.88px;top:267.58px;font-size:43.60px;line-height:43.60px;transform:scaleX(1.030);">I</div>
<div class="t" style="left:280.04px;top:267.58px;font-size:43.60px;line-height:43.60px;transform:scaleX(0.700);">J</div>
<div class="t" style="left:308.29px;top:267.58px;font-size:43.60px;line-height:43.60px;transform:scaleX(0.778);">K</div>
<div class="t" style="left:343.77px;top:267.58px;font-size:43.60px;line-height:43.60px;transform:scaleX(0.783);">L</div>
<div class="t" style="left:375.11px;top:267.58px;font-size:43.60px;line-height:43.60px;transform:scaleX(1.030);">M</div>
<div class="t" style="left:425.51px;top:267.58px;font-size:43.60px;line-height:43.60px;transform:scaleX(0.971);">N</div>
<div class="t" style="left:466.80px;top:267.58px;font-size:43.60px;line-height:43.60px;transform:scaleX(0.917);">O</div>
<div class="t" style="left:509.93px;top:267.58px;font-size:43.60px;line-height:43.60px;transform:scaleX(0.823);">P</div>
<div class="t" style="left:544.40px;top:267.58px;font-size:43.60px;line-height:43.60px;transform:scaleX(1.030);">Q</div>
<div class="t" style="left:587.96px;top:267.58px;font-size:43.60px;line-height:43.60px;transform:scaleX(0.786);">R</div>
<div class="t" style="left:624.02px;top:267.58px;font-size:43.60px;line-height:43.60px;transform:scaleX(0.754);">S</div>
<div class="t" style="left:656.11px;top:267.58px;font-size:43.60px;line-height:43.60px;transform:scaleX(0.901);">T</div>
<div class="t" style="left:691.05px;top:267.58px;font-size:43.60px;line-height:43.60px;transform:scaleX(0.934);">U</div>
<div class="t" style="left:732.81px;top:267.58px;font-size:43.60px;line-height:43.60px;transform:scaleX(0.879);">V</div>
<div class="t" style="left:770.69px;top:267.58px;font-size:43.60px;line-height:43.60px;transform:scaleX(0.979);">W</div>
<div class="t" style="left:822.68px;top:267.58px;font-size:43.60px;line-height:43.60px;transform:scaleX(0.847);">X</div>
<div class="t" style="left:857.90px;top:267.58px;font-size:43.60px;line-height:43.60px;transform:scaleX(0.825);">Y</div>
<div class="t" style="left:892.81px;top:267.58px;font-size:43.60px;line-height:43.60px;transform:scaleX(0.834);">Z</div>
<div class="t" style="left:927.10px;top:267.58px;font-size:43.60px;line-height:43.60px;transform:scaleX(0.952);">[</div>
<div class="t" style="left:954.36px;top:267.58px;font-size:43.60px;line-height:43.60px;transform:scaleX(1.030);">\</div>
<div class="t" style="left:982.60px;top:267.58px;font-size:43.60px;line-height:43.60px;transform:scaleX(0.917);">]</div>
<div class="t" style="left:1008.20px;top:267.58px;font-size:43.60px;line-height:43.60px;transform:scaleX(0.917);">^</div>
<div class="t" style="left:1041.31px;top:267.58px;font-size:43.60px;line-height:43.60px;transform:scaleX(0.929);">_</div>
<div class="t" style="left:1076.20px;top:267.58px;font-size:43.60px;line-height:43.60px;transform:scaleX(0.874);">`</div>
<div class="t" style="left:1100.76px;top:267.58px;font-size:43.60px;line-height:43.60px;transform:scaleX(0.770);">a</div>
<div class="t" style="left:1134.24px;top:267.58px;font-size:43.60px;line-height:43.60px;transform:scaleX(0.973);">b</div>
<div class="t" style="left:1170.13px;top:267.58px;font-size:43.60px;line-height:43.60px;transform:scaleX(0.844);">c</div>
<div class="t" style="left:1201.07px;top:267.58px;font-size:43.60px;line-height:43.60px;transform:scaleX(0.994);">d</div>
<div class="t" style="left:1236.30px;top:267.58px;font-size:43.60px;line-height:43.60px;transform:scaleX(0.976);">e</div>
<div class="t" style="left:1272.08px;top:267.58px;font-size:43.60px;line-height:43.60px;transform:scaleX(1.030);">f</div>
<div class="t" style="left:1295.32px;top:267.58px;font-size:43.60px;line-height:43.60px;transform:scaleX(1.019);">g</div>
<div class="t" style="left:334.28px;top:320.98px;font-size:43.60px;line-height:43.60px;transform:scaleX(1.021);">h</div>
<div class="t" style="left:370.61px;top:320.98px;font-size:43.60px;line-height:43.60px;transform:scaleX(1.030);">i</div>
<div class="t" style="left:392.78px;top:320.98px;font-size:43.60px;line-height:43.60px;transform:scaleX(1.030);">j</div>
<div class="t" style="left:414.74px;top:320.98px;font-size:43.60px;line-height:43.60px;transform:scaleX(0.902);">k</div>
<div class="t" style="left:446.96px;top:320.98px;font-size:43.60px;line-height:43.60px;transform:scaleX(1.030);">l</div>
<div class="t" style="left:468.72px;top:320.98px;font-size:43.60px;line-height:43.60px;transform:scaleX(1.015);">m</div>
<div class="t" style="left:517.44px;top:320.98px;font-size:43.60px;line-height:43.60px;transform:scaleX(1.009);">n</div>
<div class="t" style="left:552.94px;top:320.98px;font-size:43.60px;line-height:43.60px;transform:scaleX(1.030);">o</div>
<div class="t" style="left:589.77px;top:320.98px;font-size:43.60px;line-height:43.60px;transform:scaleX(0.999);">p</div>
<div class="t" style="left:625.24px;top:320.98px;font-size:43.60px;line-height:43.60px;transform:scaleX(1.009);">q</div>
<div class="t" style="left:661.87px;top:320.98px;font-size:43.60px;line-height:43.60px;transform:scaleX(1.030);">r</div>
<div class="t" style="left:688.52px;top:320.98px;font-size:43.60px;line-height:43.60px;transform:scaleX(0.828);">s</div>
<div class="t" style="left:718.55px;top:320.98px;font-size:43.60px;line-height:43.60px;transform:scaleX(1.030);">t</div>
<div class="t" style="left:744.24px;top:320.98px;font-size:43.60px;line-height:43.60px;transform:scaleX(1.030);">u</div>
<div class="t" style="left:780.49px;top:320.98px;font-size:43.60px;line-height:43.60px;transform:scaleX(0.960);">v</div>
<div class="t" style="left:813.70px;top:320.98px;font-size:43.60px;line-height:43.60px;transform:scaleX(1.003);">w</div>
<div class="t" style="left:858.11px;top:320.98px;font-size:43.60px;line-height:43.60px;transform:scaleX(0.884);">x</div>
<div class="t" style="left:889.91px;top:320.98px;font-size:43.60px;line-height:43.60px;transform:scaleX(0.890);">y</div>
<div class="t" style="left:921.87px;top:320.98px;font-size:43.60px;line-height:43.60px;transform:scaleX(0.822);">z</div>
<div class="t" style="left:952.22px;top:320.98px;font-size:43.60px;line-height:43.60px;transform:scaleX(0.887);">{</div>
<div class="t" style="left:981.76px;top:320.98px;font-size:43.60px;line-height:43.60px;transform:scaleX(1.030);">|</div>
<div class="t" style="left:1011.84px;top:320.98px;font-size:43.60px;line-height:43.60px;transform:scaleX(0.856);">}</div>
<svg style="position:absolute;left:1036.00px;top:329.50px;overflow:visible" width="30.00" height="20.00" viewBox="0 0 30 20"><path d="M2.2 9 C2.6 1.5 8.5 0.8 11.5 4.5 C14.5 8.5 20.5 9.5 21 2.5" fill="none" stroke="currentColor" stroke-width="3.60" transform="scale(1)"/></svg>
<div style="position:absolute;left:1071.10px;top:327.20px;width:22.00px;height:30.10px;border:2px solid #000;box-sizing:border-box"></div>
<div class="t" style="left:1075.96px;top:329.20px;font-size:22.00px;line-height:22.00px;transform:scale(1.030,1.331);font-weight:bold;">?</div></div>
<div style="position:absolute;left:34px;top:181px;width:235px;height:134px;background:#DD6340"></div>
<div style="position:absolute;left:36px;top:183px;width:231px;height:130px;background:#fff;color:#555;overflow:hidden"><div style="position:absolute;left:0;top:0.6px;width:231px;height:130px"><div class="t" style="left:83.99px;top:4.37px;font-size:9.86px;line-height:9.86px;transform:scaleX(0.772);color:#6a6a6a;">C</div>
<div class="t" style="left:89.72px;top:4.37px;font-size:9.86px;line-height:9.86px;transform:scaleX(0.933);color:#6a6a6a;">h</div>
<div class="t" style="left:95.29px;top:4.37px;font-size:9.86px;line-height:9.86px;transform:scaleX(0.713);color:#6a6a6a;">a</div>
<div class="t" style="left:100.23px;top:4.37px;font-size:9.86px;line-height:9.86px;transform:scaleX(1.030);color:#6a6a6a;">r</div>
<div class="t" style="left:103.69px;top:4.37px;font-size:9.86px;line-height:9.86px;transform:scaleX(0.719);color:#6a6a6a;">a</div>
<div class="t" style="left:108.62px;top:4.37px;font-size:9.86px;line-height:9.86px;transform:scaleX(0.833);color:#6a6a6a;">c</div>
<div class="t" style="left:113.20px;top:4.37px;font-size:9.86px;line-height:9.86px;transform:scaleX(1.030);color:#6a6a6a;">t</div>
<div class="t" style="left:116.47px;top:4.37px;font-size:9.86px;line-height:9.86px;transform:scaleX(0.903);color:#6a6a6a;">e</div>
<div class="t" style="left:121.79px;top:4.37px;font-size:9.86px;line-height:9.86px;transform:scaleX(1.030);color:#6a6a6a;">r</div>
<div class="t" style="left:127.89px;top:4.37px;font-size:9.86px;line-height:9.86px;transform:scaleX(1.030);color:#6a6a6a;">M</div>
<div class="t" style="left:136.83px;top:4.37px;font-size:9.86px;line-height:9.86px;transform:scaleX(0.713);color:#6a6a6a;">a</div>
<div class="t" style="left:141.81px;top:4.37px;font-size:9.86px;line-height:9.86px;transform:scaleX(0.936);color:#6a6a6a;">p</div>
<div class="t" style="left:20.19px;top:34.87px;font-size:7.05px;line-height:7.05px;transform:scaleX(1.030);">!</div>
<div class="t" style="left:24.22px;top:34.87px;font-size:7.05px;line-height:7.05px;transform:scaleX(1.030);">"</div>
<div class="t" style="left:28.92px;top:34.87px;font-size:7.05px;line-height:7.05px;transform:scaleX(0.943);">#</div>
<div class="t" style="left:34.71px;top:34.87px;font-size:7.05px;line-height:7.05px;transform:scaleX(0.878);">$</div>
<div class="t" style="left:40.10px;top:34.87px;font-size:7.05px;line-height:7.05px;transform:scaleX(0.873);">%</div>
<div class="t" style="left:47.53px;top:34.87px;font-size:7.05px;line-height:7.05px;transform:scaleX(1.030);">&amp;</div>
<div class="t" style="left:54.55px;top:34.87px;font-size:7.05px;line-height:7.05px;transform:scaleX(1.030);">'</div>
<div class="t" style="left:57.95px;top:34.87px;font-size:7.05px;line-height:7.05px;transform:scaleX(0.762);">(</div>
<div class="t" style="left:62.39px;top:34.87px;font-size:7.05px;line-height:7.05px;transform:scaleX(0.762);">)</div>
<div class="t" style="left:66.53px;top:34.87px;font-size:7.05px;line-height:7.05px;transform:scaleX(1.030);">*</div>
<div class="t" style="left:71.51px;top:34.87px;font-size:7.05px;line-height:7.05px;transform:scaleX(0.984);">+</div>
<div class="t" style="left:77.05px;top:34.87px;font-size:7.05px;line-height:7.05px;transform:scaleX(1.030);">,</div>
<div class="t" style="left:80.85px;top:34.87px;font-size:7.05px;line-height:7.05px;transform:scaleX(1.030);">-</div>
<div class="t" style="left:84.94px;top:34.87px;font-size:7.05px;line-height:7.05px;transform:scaleX(1.030);">.</div>
<div class="t" style="left:89.10px;top:34.87px;font-size:7.05px;line-height:7.05px;transform:scaleX(1.030);">/</div>
<div class="t" style="left:93.41px;top:34.87px;font-size:7.05px;line-height:7.05px;transform:scaleX(0.994);">0</div>
<div class="t" style="left:99.12px;top:34.87px;font-size:7.05px;line-height:7.05px;transform:scaleX(0.954);">1</div>
<div class="t" style="left:104.72px;top:34.87px;font-size:7.05px;line-height:7.05px;transform:scaleX(0.968);">2</div>
<div class="t" style="left:110.42px;top:34.87px;font-size:7.05px;line-height:7.05px;transform:scaleX(0.942);">3</div>
<div class="t" style="left:116.07px;top:34.87px;font-size:7.05px;line-height:7.05px;transform:scaleX(0.986);">4</div>
<div class="t" style="left:121.79px;top:34.87px;font-size:7.05px;line-height:7.05px;transform:scaleX(0.927);">5</div>
<div class="t" style="left:127.39px;top:34.87px;font-size:7.05px;line-height:7.05px;transform:scaleX(0.977);">6</div>
<div class="t" style="left:132.97px;top:34.87px;font-size:7.05px;line-height:7.05px;transform:scaleX(1.008);">7</div>
<div class="t" style="left:138.56px;top:34.87px;font-size:7.05px;line-height:7.05px;transform:scaleX(1.030);">8</div>
<div class="t" style="left:144.32px;top:34.87px;font-size:7.05px;line-height:7.05px;transform:scaleX(0.991);">9</div>
<div class="t" style="left:150.16px;top:34.87px;font-size:7.05px;line-height:7.05px;transform:scaleX(1.030);">:</div>
<div class="t" style="left:153.74px;top:34.87px;font-size:7.05px;line-height:7.05px;transform:scaleX(1.030);">;</div>
<div class="t" style="left:157.44px;top:34.87px;font-size:7.05px;line-height:7.05px;transform:scaleX(0.979);">&lt;</div>
<div class="t" style="left:163.22px;top:34.87px;font-size:7.05px;line-height:7.05px;transform:scaleX(0.922);">=</div>
<div class="t" style="left:168.80px;top:34.87px;font-size:7.05px;line-height:7.05px;transform:scaleX(0.955);">&gt;</div>
<div class="t" style="left:174.64px;top:34.87px;font-size:7.05px;line-height:7.05px;transform:scaleX(0.827);">?</div>
<div class="t" style="left:179.80px;top:34.87px;font-size:7.05px;line-height:7.05px;transform:scaleX(0.950);">@</div>
<div class="t" style="left:188.49px;top:34.87px;font-size:7.05px;line-height:7.05px;transform:scaleX(0.883);">A</div>
<div class="t" style="left:194.73px;top:34.87px;font-size:7.05px;line-height:7.05px;transform:scaleX(0.857);">B</div>
<div class="t" style="left:200.49px;top:34.87px;font-size:7.05px;line-height:7.05px;transform:scaleX(0.805);">C</div>
<div class="t" style="left:206.44px;top:34.87px;font-size:7.05px;line-height:7.05px;transform:scaleX(0.925);">D</div>
<div class="t" style="left:17.89px;top:43.26px;font-size:7.05px;line-height:7.05px;transform:scaleX(0.724);">E</div>
<div class="t" style="left:23.53px;top:43.26px;font-size:7.05px;line-height:7.05px;transform:scaleX(0.707);">F</div>
<div class="t" style="left:28.53px;top:43.26px;font-size:7.05px;line-height:7.05px;transform:scaleX(0.879);">G</div>
<div class="t" style="left:35.23px;top:43.26px;font-size:7.05px;line-height:7.05px;transform:scaleX(0.913);">H</div>
<div class="t" style="left:41.69px;top:43.26px;font-size:7.05px;line-height:7.05px;transform:scaleX(1.030);">I</div>
<div class="t" style="left:45.27px;top:43.26px;font-size:7.05px;line-height:7.05px;transform:scaleX(0.700);">J</div>
<div class="t" style="left:49.84px;top:43.26px;font-size:7.05px;line-height:7.05px;transform:scaleX(0.778);">K</div>
<div class="t" style="left:55.57px;top:43.26px;font-size:7.05px;line-height:7.05px;transform:scaleX(0.783);">L</div>
<div class="t" style="left:60.64px;top:43.26px;font-size:7.05px;line-height:7.05px;transform:scaleX(1.030);">M</div>
<div class="t" style="left:68.79px;top:43.26px;font-size:7.05px;line-height:7.05px;transform:scaleX(0.971);">N</div>
<div class="t" style="left:75.46px;top:43.26px;font-size:7.05px;line-height:7.05px;transform:scaleX(0.917);">O</div>
<div class="t" style="left:82.43px;top:43.26px;font-size:7.05px;line-height:7.05px;transform:scaleX(0.823);">P</div>
<div class="t" style="left:88.00px;top:43.26px;font-size:7.05px;line-height:7.05px;transform:scaleX(1.030);">Q</div>
<div class="t" style="left:95.04px;top:43.26px;font-size:7.05px;line-height:7.05px;transform:scaleX(0.786);">R</div>
<div class="t" style="left:100.87px;top:43.26px;font-size:7.05px;line-height:7.05px;transform:scaleX(0.754);">S</div>
<div class="t" style="left:106.06px;top:43.26px;font-size:7.05px;line-height:7.05px;transform:scaleX(0.901);">T</div>
<div class="t" style="left:111.71px;top:43.26px;font-size:7.05px;line-height:7.05px;transform:scaleX(0.934);">U</div>
<div class="t" style="left:118.46px;top:43.26px;font-size:7.05px;line-height:7.05px;transform:scaleX(0.879);">V</div>
<div class="t" style="left:124.58px;top:43.26px;font-size:7.05px;line-height:7.05px;transform:scaleX(0.979);">W</div>
<div class="t" style="left:132.99px;top:43.26px;font-size:7.05px;line-height:7.05px;transform:scaleX(0.847);">X</div>
<div class="t" style="left:138.68px;top:43.26px;font-size:7.05px;line-height:7.05px;transform:scaleX(0.825);">Y</div>
<div class="t" style="left:144.32px;top:43.26px;font-size:7.05px;line-height:7.05px;transform:scaleX(0.834);">Z</div>
<div class="t" style="left:149.87px;top:43.26px;font-size:7.05px;line-height:7.05px;transform:scaleX(0.952);">[</div>
<div class="t" style="left:154.27px;top:43.26px;font-size:7.05px;line-height:7.05px;transform:scaleX(1.030);">\</div>
<div class="t" style="left:158.84px;top:43.26px;font-size:7.05px;line-height:7.05px;transform:scaleX(0.917);">]</div>
<div class="t" style="left:162.98px;top:43.26px;font-size:7.05px;line-height:7.05px;transform:scaleX(0.917);">^</div>
<div class="t" style="left:168.33px;top:43.26px;font-size:7.05px;line-height:7.05px;transform:scaleX(0.929);">_</div>
<div class="t" style="left:173.97px;top:43.26px;font-size:7.05px;line-height:7.05px;transform:scaleX(0.874);">`</div>
<div class="t" style="left:177.94px;top:43.26px;font-size:7.05px;line-height:7.05px;transform:scaleX(0.770);">a</div>
<div class="t" style="left:183.35px;top:43.26px;font-size:7.05px;line-height:7.05px;transform:scaleX(0.973);">b</div>
<div class="t" style="left:189.15px;top:43.26px;font-size:7.05px;line-height:7.05px;transform:scaleX(0.844);">c</div>
<div class="t" style="left:194.15px;top:43.26px;font-size:7.05px;line-height:7.05px;transform:scaleX(0.994);">d</div>
<div class="t" style="left:199.85px;top:43.26px;font-size:7.05px;line-height:7.05px;transform:scaleX(0.976);">e</div>
<div class="t" style="left:205.63px;top:43.26px;font-size:7.05px;line-height:7.05px;transform:scaleX(1.030);">f</div>
<div class="t" style="left:209.39px;top:43.26px;font-size:7.05px;line-height:7.05px;transform:scaleX(1.019);">g</div>
<div class="t" style="left:54.04px;top:51.89px;font-size:7.05px;line-height:7.05px;transform:scaleX(1.021);">h</div>
<div class="t" style="left:59.91px;top:51.89px;font-size:7.05px;line-height:7.05px;transform:scaleX(1.030);">i</div>
<div class="t" style="left:63.49px;top:51.89px;font-size:7.05px;line-height:7.05px;transform:scaleX(1.030);">j</div>
<div class="t" style="left:67.04px;top:51.89px;font-size:7.05px;line-height:7.05px;transform:scaleX(0.902);">k</div>
<div class="t" style="left:72.25px;top:51.89px;font-size:7.05px;line-height:7.05px;transform:scaleX(1.030);">l</div>
<div class="t" style="left:75.77px;top:51.89px;font-size:7.05px;line-height:7.05px;transform:scaleX(1.015);">m</div>
<div class="t" style="left:83.64px;top:51.89px;font-size:7.05px;line-height:7.05px;transform:scaleX(1.009);">n</div>
<div class="t" style="left:89.38px;top:51.89px;font-size:7.05px;line-height:7.05px;transform:scaleX(1.030);">o</div>
<div class="t" style="left:95.34px;top:51.89px;font-size:7.05px;line-height:7.05px;transform:scaleX(0.999);">p</div>
<div class="t" style="left:101.07px;top:51.89px;font-size:7.05px;line-height:7.05px;transform:scaleX(1.009);">q</div>
<div class="t" style="left:106.99px;top:51.89px;font-size:7.05px;line-height:7.05px;transform:scaleX(1.030);">r</div>
<div class="t" style="left:111.30px;top:51.89px;font-size:7.05px;line-height:7.05px;transform:scaleX(0.828);">s</div>
<div class="t" style="left:116.15px;top:51.89px;font-size:7.05px;line-height:7.05px;transform:scaleX(1.030);">t</div>
<div class="t" style="left:120.31px;top:51.89px;font-size:7.05px;line-height:7.05px;transform:scaleX(1.030);">u</div>
<div class="t" style="left:126.17px;top:51.89px;font-size:7.05px;line-height:7.05px;transform:scaleX(0.960);">v</div>
<div class="t" style="left:131.54px;top:51.89px;font-size:7.05px;line-height:7.05px;transform:scaleX(1.003);">w</div>
<div class="t" style="left:138.72px;top:51.89px;font-size:7.05px;line-height:7.05px;transform:scaleX(0.884);">x</div>
<div class="t" style="left:143.85px;top:51.89px;font-size:7.05px;line-height:7.05px;transform:scaleX(0.890);">y</div>
<div class="t" style="left:149.02px;top:51.89px;font-size:7.05px;line-height:7.05px;transform:scaleX(0.822);">z</div>
<div class="t" style="left:153.93px;top:51.89px;font-size:7.05px;line-height:7.05px;transform:scaleX(0.887);">{</div>
<div class="t" style="left:158.70px;top:51.89px;font-size:7.05px;line-height:7.05px;transform:scaleX(1.030);">|</div>
<div class="t" style="left:163.57px;top:51.89px;font-size:7.05px;line-height:7.05px;transform:scaleX(0.856);">}</div>
<svg style="position:absolute;left:167.47px;top:53.26px;overflow:visible" width="4.85" height="3.23" viewBox="0 0 30 20"><path d="M2.2 9 C2.6 1.5 8.5 0.8 11.5 4.5 C14.5 8.5 20.5 9.5 21 2.5" fill="none" stroke="currentColor" stroke-width="3.60" transform="scale(1)"/></svg>
<div style="position:absolute;left:173.14px;top:52.89px;width:3.49px;height:4.75px;border:0.5px solid #888;box-sizing:border-box"></div></div></div>
<svg style="position:absolute;left:393px;top:166px;" width="1429" height="14" viewBox="0 0 1429 14"><rect x="0" y="0" width="1429" height="14" fill="#fff"/><rect x="7.24" y="6" width="1" height="2" fill="#b0b0b0"/><rect x="17.79" y="4.2" width="1" height="5" fill="#8c8c8c"/><rect x="28.34" y="6" width="1" height="2" fill="#b0b0b0"/><rect x="49.44" y="6" width="1" height="2" fill="#b0b0b0"/><rect x="59.99" y="4.2" width="1" height="5" fill="#8c8c8c"/><rect x="70.53" y="6" width="1" height="2" fill="#b0b0b0"/><rect x="91.63" y="6" width="1" height="2" fill="#b0b0b0"/><rect x="102.18" y="4.2" width="1" height="5" fill="#8c8c8c"/><rect x="112.73" y="6" width="1" height="2" fill="#b0b0b0"/><rect x="133.83" y="6" width="1" height="2" fill="#b0b0b0"/><rect x="144.37" y="4.2" width="1" height="5" fill="#8c8c8c"/><rect x="154.92" y="6" width="1" height="2" fill="#b0b0b0"/><rect x="176.02" y="6" width="1" height="2" fill="#b0b0b0"/><rect x="186.57" y="4.2" width="1" height="5" fill="#8c8c8c"/><rect x="197.12" y="6" width="1" height="2" fill="#b0b0b0"/><rect x="218.22" y="6" width="1" height="2" fill="#b0b0b0"/><rect x="228.76" y="4.2" width="1" height="5" fill="#8c8c8c"/><rect x="239.31" y="6" width="1" height="2" fill="#b0b0b0"/><rect x="260.41" y="6" width="1" height="2" fill="#b0b0b0"/><rect x="270.96" y="4.2" width="1" height="5" fill="#8c8c8c"/><rect x="281.51" y="6" width="1" height="2" fill="#b0b0b0"/><rect x="302.60" y="6" width="1" height="2" fill="#b0b0b0"/><rect x="313.15" y="4.2" width="1" height="5" fill="#8c8c8c"/><rect x="323.70" y="6" width="1" height="2" fill="#b0b0b0"/><rect x="344.80" y="6" width="1" height="2" fill="#b0b0b0"/><rect x="355.35" y="4.2" width="1" height="5" fill="#8c8c8c"/><rect x="365.90" y="6" width="1" height="2" fill="#b0b0b0"/><rect x="386.99" y="6" width="1" height="2" fill="#b0b0b0"/><rect x="397.54" y="4.2" width="1" height="5" fill="#8c8c8c"/><rect x="408.09" y="6" width="1" height="2" fill="#b0b0b0"/><rect x="429.19" y="6" width="1" height="2" fill="#b0b0b0"/><rect x="439.74" y="4.2" width="1" height="5" fill="#8c8c8c"/><rect x="450.28" y="6" width="1" height="2" fill="#b0b0b0"/><rect x="471.38" y="6" width="1" height="2" fill="#b0b0b0"/><rect x="481.93" y="4.2" width="1" height="5" fill="#8c8c8c"/><rect x="492.48" y="6" width="1" height="2" fill="#b0b0b0"/><rect x="513.58" y="6" width="1" height="2" fill="#b0b0b0"/><rect x="524.12" y="4.2" width="1" height="5" fill="#8c8c8c"/><rect x="534.67" y="6" width="1" height="2" fill="#b0b0b0"/><rect x="555.77" y="6" width="1" height="2" fill="#b0b0b0"/><rect x="566.32" y="4.2" width="1" height="5" fill="#8c8c8c"/><rect x="576.87" y="6" width="1" height="2" fill="#b0b0b0"/><rect x="597.97" y="6" width="1" height="2" fill="#b0b0b0"/><rect x="608.51" y="4.2" width="1" height="5" fill="#8c8c8c"/><rect x="619.06" y="6" width="1" height="2" fill="#b0b0b0"/><rect x="640.16" y="6" width="1" height="2" fill="#b0b0b0"/><rect x="650.71" y="4.2" width="1" height="5" fill="#8c8c8c"/><rect x="661.26" y="6" width="1" height="2" fill="#b0b0b0"/><rect x="682.35" y="6" width="1" height="2" fill="#b0b0b0"/><rect x="692.90" y="4.2" width="1" height="5" fill="#8c8c8c"/><rect x="703.45" y="6" width="1" height="2" fill="#b0b0b0"/><rect x="724.55" y="6" width="1" height="2" fill="#b0b0b0"/><rect x="735.10" y="4.2" width="1" height="5" fill="#8c8c8c"/><rect x="745.65" y="6" width="1" height="2" fill="#b0b0b0"/><rect x="766.74" y="6" width="1" height="2" fill="#b0b0b0"/><rect x="777.29" y="4.2" width="1" height="5" fill="#8c8c8c"/><rect x="787.84" y="6" width="1" height="2" fill="#b0b0b0"/><rect x="808.94" y="6" width="1" height="2" fill="#b0b0b0"/><rect x="819.49" y="4.2" width="1" height="5" fill="#8c8c8c"/><rect x="830.03" y="6" width="1" height="2" fill="#b0b0b0"/><rect x="851.13" y="6" width="1" height="2" fill="#b0b0b0"/><rect x="861.68" y="4.2" width="1" height="5" fill="#8c8c8c"/><rect x="872.23" y="6" width="1" height="2" fill="#b0b0b0"/><rect x="893.33" y="6" width="1" height="2" fill="#b0b0b0"/><rect x="903.88" y="4.2" width="1" height="5" fill="#8c8c8c"/><rect x="914.42" y="6" width="1" height="2" fill="#b0b0b0"/><rect x="935.52" y="6" width="1" height="2" fill="#b0b0b0"/><rect x="946.07" y="4.2" width="1" height="5" fill="#8c8c8c"/><rect x="956.62" y="6" width="1" height="2" fill="#b0b0b0"/><rect x="977.72" y="6" width="1" height="2" fill="#b0b0b0"/><rect x="988.26" y="4.2" width="1" height="5" fill="#8c8c8c"/><rect x="998.81" y="6" width="1" height="2" fill="#b0b0b0"/><rect x="1019.91" y="6" width="1" height="2" fill="#b0b0b0"/><rect x="1030.46" y="4.2" width="1" height="5" fill="#8c8c8c"/><rect x="1041.01" y="6" width="1" height="2" fill="#b0b0b0"/><rect x="1062.10" y="6" width="1" height="2" fill="#b0b0b0"/><rect x="1072.65" y="4.2" width="1" height="5" fill="#8c8c8c"/><rect x="1083.20" y="6" width="1" height="2" fill="#b0b0b0"/><rect x="1104.30" y="6" width="1" height="2" fill="#b0b0b0"/><rect x="1114.85" y="4.2" width="1" height="5" fill="#8c8c8c"/><rect x="1125.40" y="6" width="1" height="2" fill="#b0b0b0"/><rect x="1146.49" y="6" width="1" height="2" fill="#b0b0b0"/><rect x="1157.04" y="4.2" width="1" height="5" fill="#8c8c8c"/><rect x="1167.59" y="6" width="1" height="2" fill="#b0b0b0"/><rect x="1188.69" y="6" width="1" height="2" fill="#b0b0b0"/><rect x="1199.24" y="4.2" width="1" height="5" fill="#8c8c8c"/><rect x="1209.78" y="6" width="1" height="2" fill="#b0b0b0"/><rect x="1230.88" y="6" width="1" height="2" fill="#b0b0b0"/><rect x="1241.43" y="4.2" width="1" height="5" fill="#8c8c8c"/><rect x="1251.98" y="6" width="1" height="2" fill="#b0b0b0"/><rect x="1273.08" y="6" width="1" height="2" fill="#b0b0b0"/><rect x="1283.63" y="4.2" width="1" height="5" fill="#8c8c8c"/><rect x="1294.17" y="6" width="1" height="2" fill="#b0b0b0"/><rect x="1315.27" y="6" width="1" height="2" fill="#b0b0b0"/><rect x="1325.82" y="4.2" width="1" height="5" fill="#8c8c8c"/><rect x="1336.37" y="6" width="1" height="2" fill="#b0b0b0"/><rect x="1357.47" y="6" width="1" height="2" fill="#b0b0b0"/><rect x="1368.01" y="4.2" width="1" height="5" fill="#8c8c8c"/><rect x="1378.56" y="6" width="1" height="2" fill="#b0b0b0"/><rect x="1399.66" y="6" width="1" height="2" fill="#b0b0b0"/><rect x="1410.21" y="4.2" width="1" height="5" fill="#8c8c8c"/><rect x="1420.76" y="6" width="1" height="2" fill="#b0b0b0"/></svg>
<div class="t" style="left:425.92px;top:167.63px;font-size:11.30px;line-height:11.30px;color:#5A5A5A;">16</div>
<div class="t" style="left:468.11px;top:167.63px;font-size:11.30px;line-height:11.30px;color:#5A5A5A;">15</div>
<div class="t" style="left:510.25px;top:167.63px;font-size:11.30px;line-height:11.30px;color:#5A5A5A;">14</div>
<div class="t" style="left:552.50px;top:167.63px;font-size:11.30px;line-height:11.30px;color:#5A5A5A;">13</div>
<div class="t" style="left:594.75px;top:167.63px;font-size:11.30px;line-height:11.30px;color:#5A5A5A;">12</div>
<div class="t" style="left:637.34px;top:167.63px;font-size:11.30px;line-height:11.30px;color:#5A5A5A;">11</div>
<div class="t" style="left:679.06px;top:167.63px;font-size:11.30px;line-height:11.30px;color:#5A5A5A;">10</div>
<div class="t" style="left:724.61px;top:167.63px;font-size:11.30px;line-height:11.30px;color:#5A5A5A;">9</div>
<div class="t" style="left:766.78px;top:167.63px;font-size:11.30px;line-height:11.30px;color:#5A5A5A;">8</div>
<div class="t" style="left:809.00px;top:167.63px;font-size:11.30px;line-height:11.30px;color:#5A5A5A;">7</div>
<div class="t" style="left:851.14px;top:167.63px;font-size:11.30px;line-height:11.30px;color:#5A5A5A;">6</div>
<div class="t" style="left:893.39px;top:167.63px;font-size:11.30px;line-height:11.30px;color:#5A5A5A;">5</div>
<div class="t" style="left:935.64px;top:167.63px;font-size:11.30px;line-height:11.30px;color:#5A5A5A;">4</div>
<div class="t" style="left:977.78px;top:167.63px;font-size:11.30px;line-height:11.30px;color:#5A5A5A;">3</div>
<div class="t" style="left:1019.98px;top:167.63px;font-size:11.30px;line-height:11.30px;color:#5A5A5A;">2</div>
<div class="t" style="left:1062.00px;top:167.63px;font-size:11.30px;line-height:11.30px;color:#5A5A5A;">1</div>
<div class="t" style="left:1104.34px;top:167.63px;font-size:11.30px;line-height:11.30px;color:#5A5A5A;">0</div>
<div class="t" style="left:1146.39px;top:167.63px;font-size:11.30px;line-height:11.30px;color:#5A5A5A;">1</div>
<div class="t" style="left:1188.75px;top:167.63px;font-size:11.30px;line-height:11.30px;color:#5A5A5A;">2</div>
<div class="t" style="left:1230.95px;top:167.63px;font-size:11.30px;line-height:11.30px;color:#5A5A5A;">3</div>
<div class="t" style="left:1273.20px;top:167.63px;font-size:11.30px;line-height:11.30px;color:#5A5A5A;">4</div>
<div class="t" style="left:1315.34px;top:167.63px;font-size:11.30px;line-height:11.30px;color:#5A5A5A;">5</div>
<div class="t" style="left:1357.47px;top:167.63px;font-size:11.30px;line-height:11.30px;color:#5A5A5A;">6</div>
<div class="t" style="left:1399.73px;top:167.63px;font-size:11.30px;line-height:11.30px;color:#5A5A5A;">7</div>
<div class="t" style="left:1441.89px;top:167.63px;font-size:11.30px;line-height:11.30px;color:#5A5A5A;">8</div>
<div class="t" style="left:1484.11px;top:167.63px;font-size:11.30px;line-height:11.30px;color:#5A5A5A;">9</div>
<div class="t" style="left:1522.95px;top:167.63px;font-size:11.30px;line-height:11.30px;color:#5A5A5A;">10</div>
<div class="t" style="left:1565.62px;top:167.63px;font-size:11.30px;line-height:11.30px;color:#5A5A5A;">11</div>
<div class="t" style="left:1607.42px;top:167.63px;font-size:11.30px;line-height:11.30px;color:#5A5A5A;">12</div>
<div class="t" style="left:1649.56px;top:167.63px;font-size:11.30px;line-height:11.30px;color:#5A5A5A;">13</div>
<div class="t" style="left:1691.70px;top:167.63px;font-size:11.30px;line-height:11.30px;color:#5A5A5A;">14</div>
<div class="t" style="left:1733.95px;top:167.63px;font-size:11.30px;line-height:11.30px;color:#5A5A5A;">15</div>
<div class="t" style="left:1776.14px;top:167.63px;font-size:11.30px;line-height:11.30px;color:#5A5A5A;">16</div>
<svg style="position:absolute;left:293px;top:193px;" width="14" height="804" viewBox="0 0 14 804"><rect x="0" y="0" width="14" height="804" fill="#fff"/><rect x="4.5" y="0.65" width="5" height="1" fill="#8c8c8c"/><rect x="6" y="11.20" width="2" height="1" fill="#b0b0b0"/><rect x="6" y="32.30" width="2" height="1" fill="#b0b0b0"/><rect x="4.5" y="42.85" width="5" height="1" fill="#8c8c8c"/><rect x="6" y="53.40" width="2" height="1" fill="#b0b0b0"/><rect x="6" y="74.49" width="2" height="1" fill="#b0b0b0"/><rect x="4.5" y="85.04" width="5" height="1" fill="#8c8c8c"/><rect x="6" y="95.59" width="2" height="1" fill="#b0b0b0"/><rect x="6" y="116.69" width="2" height="1" fill="#b0b0b0"/><rect x="4.5" y="127.24" width="5" height="1" fill="#8c8c8c"/><rect x="6" y="137.78" width="2" height="1" fill="#b0b0b0"/><rect x="6" y="158.88" width="2" height="1" fill="#b0b0b0"/><rect x="4.5" y="169.43" width="5" height="1" fill="#8c8c8c"/><rect x="6" y="179.98" width="2" height="1" fill="#b0b0b0"/><rect x="6" y="201.08" width="2" height="1" fill="#b0b0b0"/><rect x="4.5" y="211.62" width="5" height="1" fill="#8c8c8c"/><rect x="6" y="222.17" width="2" height="1" fill="#b0b0b0"/><rect x="6" y="243.27" width="2" height="1" fill="#b0b0b0"/><rect x="4.5" y="253.82" width="5" height="1" fill="#8c8c8c"/><rect x="6" y="264.37" width="2" height="1" fill="#b0b0b0"/><rect x="6" y="285.47" width="2" height="1" fill="#b0b0b0"/><rect x="4.5" y="296.01" width="5" height="1" fill="#8c8c8c"/><rect x="6" y="306.56" width="2" height="1" fill="#b0b0b0"/><rect x="6" y="327.66" width="2" height="1" fill="#b0b0b0"/><rect x="4.5" y="338.21" width="5" height="1" fill="#8c8c8c"/><rect x="6" y="348.76" width="2" height="1" fill="#b0b0b0"/><rect x="6" y="369.85" width="2" height="1" fill="#b0b0b0"/><rect x="4.5" y="380.40" width="5" height="1" fill="#8c8c8c"/><rect x="6" y="390.95" width="2" height="1" fill="#b0b0b0"/><rect x="6" y="412.05" width="2" height="1" fill="#b0b0b0"/><rect x="4.5" y="422.60" width="5" height="1" fill="#8c8c8c"/><rect x="6" y="433.15" width="2" height="1" fill="#b0b0b0"/><rect x="6" y="454.24" width="2" height="1" fill="#b0b0b0"/><rect x="4.5" y="464.79" width="5" height="1" fill="#8c8c8c"/><rect x="6" y="475.34" width="2" height="1" fill="#b0b0b0"/><rect x="6" y="496.44" width="2" height="1" fill="#b0b0b0"/><rect x="4.5" y="506.99" width="5" height="1" fill="#8c8c8c"/><rect x="6" y="517.53" width="2" height="1" fill="#b0b0b0"/><rect x="6" y="538.63" width="2" height="1" fill="#b0b0b0"/><rect x="4.5" y="549.18" width="5" height="1" fill="#8c8c8c"/><rect x="6" y="559.73" width="2" height="1" fill="#b0b0b0"/><rect x="6" y="580.83" width="2" height="1" fill="#b0b0b0"/><rect x="4.5" y="591.38" width="5" height="1" fill="#8c8c8c"/><rect x="6" y="601.92" width="2" height="1" fill="#b0b0b0"/><rect x="6" y="623.02" width="2" height="1" fill="#b0b0b0"/><rect x="4.5" y="633.57" width="5" height="1" fill="#8c8c8c"/><rect x="6" y="644.12" width="2" height="1" fill="#b0b0b0"/><rect x="6" y="665.22" width="2" height="1" fill="#b0b0b0"/><rect x="4.5" y="675.76" width="5" height="1" fill="#8c8c8c"/><rect x="6" y="686.31" width="2" height="1" fill="#b0b0b0"/><rect x="6" y="707.41" width="2" height="1" fill="#b0b0b0"/><rect x="4.5" y="717.96" width="5" height="1" fill="#8c8c8c"/><rect x="6" y="728.51" width="2" height="1" fill="#b0b0b0"/><rect x="6" y="749.60" width="2" height="1" fill="#b0b0b0"/><rect x="4.5" y="760.15" width="5" height="1" fill="#8c8c8c"/><rect x="6" y="770.70" width="2" height="1" fill="#b0b0b0"/><rect x="6" y="791.80" width="2" height="1" fill="#b0b0b0"/><rect x="4.5" y="802.35" width="5" height="1" fill="#8c8c8c"/></svg>
<div class="t" style="left:291.00px;top:209.30px;font-size:11.30px;line-height:11.30px;color:#5A5A5A;width:20px;text-align:center;transform-origin:50% 50%;transform:rotate(-90deg)">9</div>
<div class="t" style="left:291.00px;top:251.49px;font-size:11.30px;line-height:11.30px;color:#5A5A5A;width:20px;text-align:center;transform-origin:50% 50%;transform:rotate(-90deg)">8</div>
<div class="t" style="left:291.00px;top:293.69px;font-size:11.30px;line-height:11.30px;color:#5A5A5A;width:20px;text-align:center;transform-origin:50% 50%;transform:rotate(-90deg)">7</div>
<div class="t" style="left:291.00px;top:335.88px;font-size:11.30px;line-height:11.30px;color:#5A5A5A;width:20px;text-align:center;transform-origin:50% 50%;transform:rotate(-90deg)">6</div>
<div class="t" style="left:291.00px;top:378.08px;font-size:11.30px;line-height:11.30px;color:#5A5A5A;width:20px;text-align:center;transform-origin:50% 50%;transform:rotate(-90deg)">5</div>
<div class="t" style="left:291.00px;top:420.27px;font-size:11.30px;line-height:11.30px;color:#5A5A5A;width:20px;text-align:center;transform-origin:50% 50%;transform:rotate(-90deg)">4</div>
<div class="t" style="left:291.00px;top:462.47px;font-size:11.30px;line-height:11.30px;color:#5A5A5A;width:20px;text-align:center;transform-origin:50% 50%;transform:rotate(-90deg)">3</div>
<div class="t" style="left:291.00px;top:504.66px;font-size:11.30px;line-height:11.30px;color:#5A5A5A;width:20px;text-align:center;transform-origin:50% 50%;transform:rotate(-90deg)">2</div>
<div class="t" style="left:291.00px;top:546.86px;font-size:11.30px;line-height:11.30px;color:#5A5A5A;width:20px;text-align:center;transform-origin:50% 50%;transform:rotate(-90deg)">1</div>
<div class="t" style="left:291.00px;top:589.05px;font-size:11.30px;line-height:11.30px;color:#5A5A5A;width:20px;text-align:center;transform-origin:50% 50%;transform:rotate(-90deg)">0</div>
<div class="t" style="left:291.00px;top:631.24px;font-size:11.30px;line-height:11.30px;color:#5A5A5A;width:20px;text-align:center;transform-origin:50% 50%;transform:rotate(-90deg)">1</div>
<div class="t" style="left:291.00px;top:673.44px;font-size:11.30px;line-height:11.30px;color:#5A5A5A;width:20px;text-align:center;transform-origin:50% 50%;transform:rotate(-90deg)">2</div>
<div class="t" style="left:291.00px;top:715.63px;font-size:11.30px;line-height:11.30px;color:#5A5A5A;width:20px;text-align:center;transform-origin:50% 50%;transform:rotate(-90deg)">3</div>
<div class="t" style="left:291.00px;top:757.83px;font-size:11.30px;line-height:11.30px;color:#5A5A5A;width:20px;text-align:center;transform-origin:50% 50%;transform:rotate(-90deg)">4</div>
<div class="t" style="left:291.00px;top:800.02px;font-size:11.30px;line-height:11.30px;color:#5A5A5A;width:20px;text-align:center;transform-origin:50% 50%;transform:rotate(-90deg)">5</div>
<div class="t" style="left:291.00px;top:842.22px;font-size:11.30px;line-height:11.30px;color:#5A5A5A;width:20px;text-align:center;transform-origin:50% 50%;transform:rotate(-90deg)">6</div>
<div class="t" style="left:291.00px;top:884.41px;font-size:11.30px;line-height:11.30px;color:#5A5A5A;width:20px;text-align:center;transform-origin:50% 50%;transform:rotate(-90deg)">7</div>
<div class="t" style="left:291.00px;top:926.61px;font-size:11.30px;line-height:11.30px;color:#5A5A5A;width:20px;text-align:center;transform-origin:50% 50%;transform:rotate(-90deg)">8</div>
<div class="t" style="left:291.00px;top:968.80px;font-size:11.30px;line-height:11.30px;color:#5A5A5A;width:20px;text-align:center;transform-origin:50% 50%;transform:rotate(-90deg)">9</div>
</body></html>
